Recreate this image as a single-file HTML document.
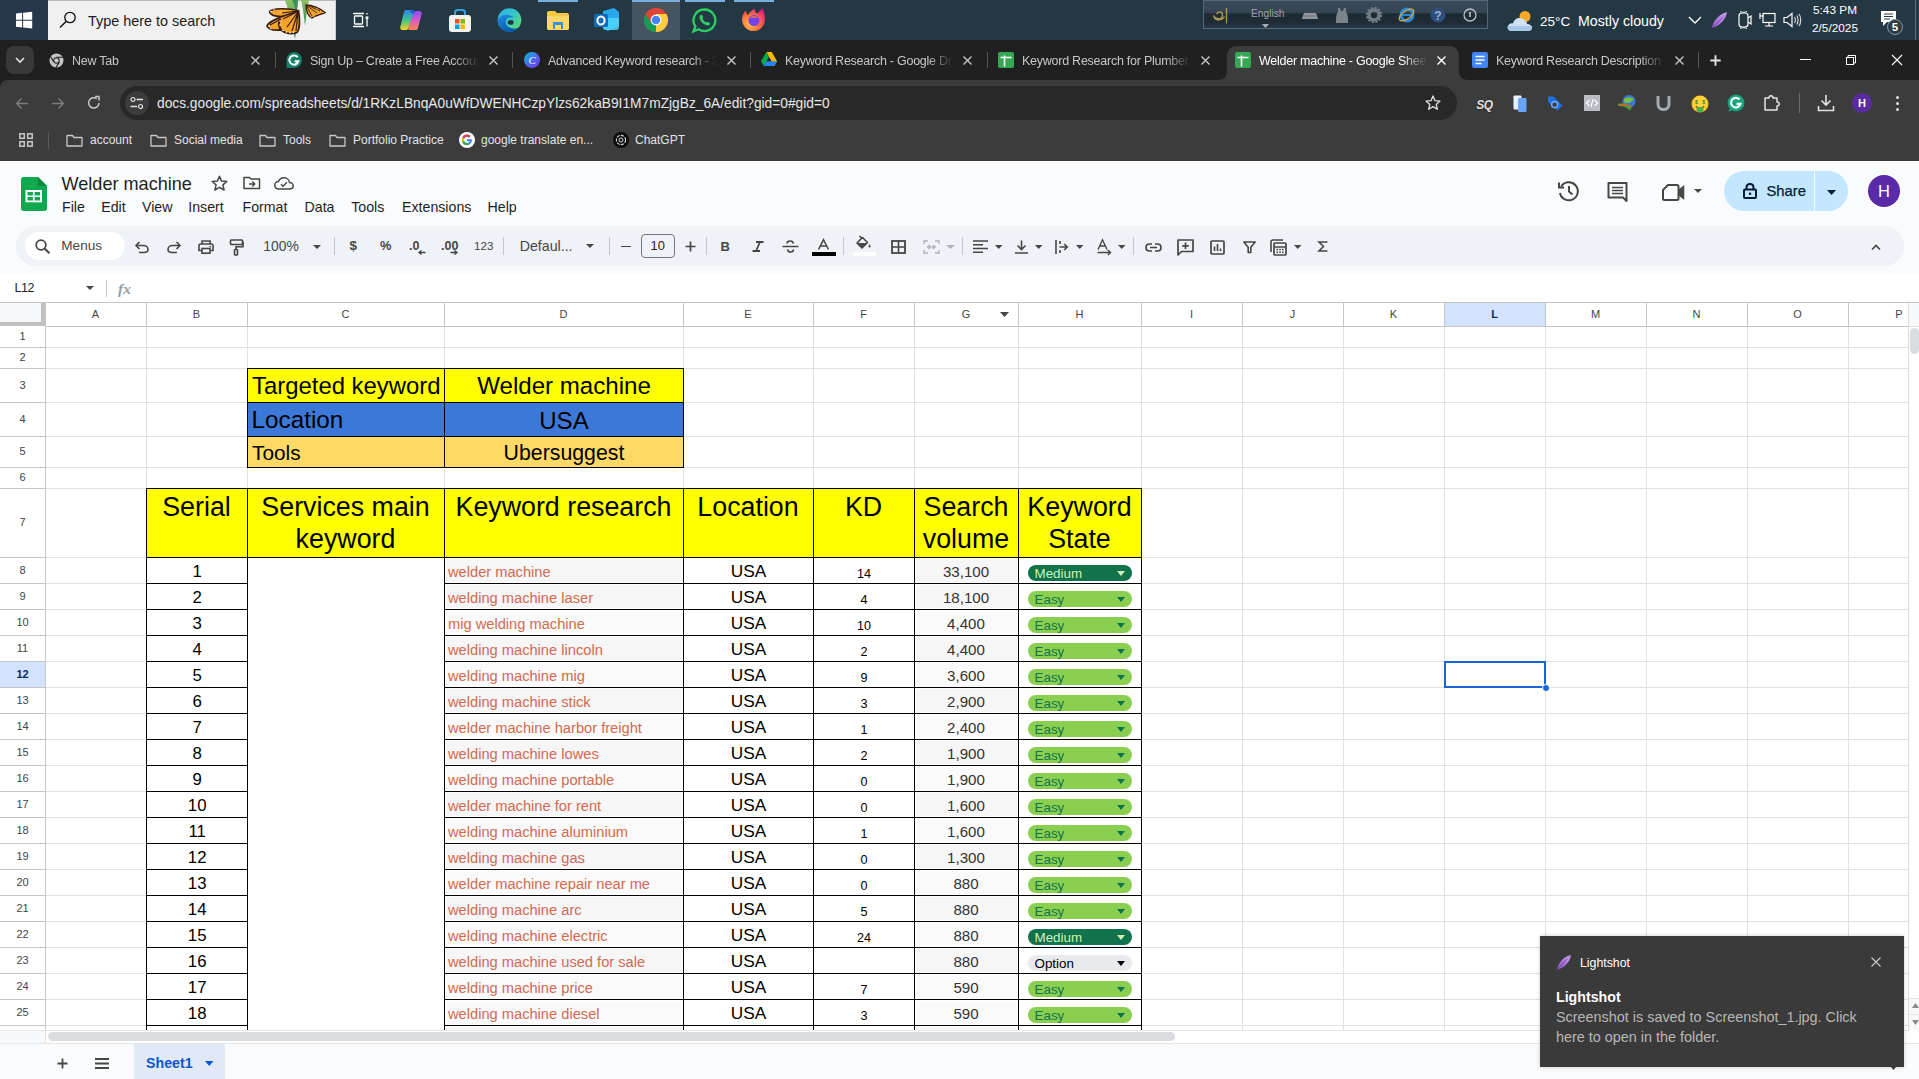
<!DOCTYPE html><html><head><meta charset="utf-8"><style>
*{margin:0;padding:0;box-sizing:border-box}
html,body{width:1919px;height:1079px;overflow:hidden;background:#f9fbfd;font-family:"Liberation Sans",sans-serif}
.a{position:absolute}
.t{position:absolute;white-space:nowrap;line-height:1}
svg{position:absolute;overflow:visible}
</style></head><body>
<div class="a" style="left:0px;top:0px;width:1919px;height:40px;background:#243844"></div>
<div class="a" style="left:0px;top:0px;width:48px;height:40px;background:#28384a"></div>
<svg style="left:16px;top:11.5px;" width="17" height="18" viewBox="0 0 17 18"><path d="M0 1.6L6.1 0.8V7.8H0z M7.1 0.7L16.2 -0.3V7.8H7.1z M0 8.8H6.1V15.5L0 14.7z M7.1 8.8H16.2V16.6L7.1 15.6z" fill="#fff"/></svg>
<div class="a" style="left:48px;top:0px;width:288px;height:40px;background:#f0f0f0"></div>
<div class="a" style="left:48px;top:0px;width:288px;height:1px;background:#b8b8b8"></div>
<svg style="left:59px;top:11px;" width="18" height="18" viewBox="0 0 18 18"><circle cx="11" cy="6.5" r="5.2" fill="none" stroke="#111" stroke-width="1.3"/><path d="M7.3 10.2L1 16.6" stroke="#111" stroke-width="1.4"/></svg>
<div class="t" style="left:88px;top:14.31px;font-size:14.4px;color:#1b1b1b;">Type here to search</div>
<svg style="left:260px;top:0px;" width="76" height="40" viewBox="0 0 76 40"><defs><linearGradient id="lf" x1="0" y1="0" x2="0" y2="1"><stop offset="0" stop-color="#8cc163"/><stop offset="1" stop-color="#2f8a55"/></linearGradient></defs>
<path d="M25 0 H32 C37 8 38 22 35 39 C33 30 30 14 25 0Z" fill="url(#lf)"/>
<path d="M32 0 H38 C38 6 37 10 36 13 C35 8 34 4 32 0Z" fill="#3c8f5a"/>
<path d="M41 0 H49 C47 8 46 18 45 26 C44 16 43 8 41 0Z" fill="url(#lf)"/>
<path d="M9.5 11.5 C13 8 28 8 38 10.5 C37 13.5 30 16 21 16.5 C14 16.5 10 14.5 9.5 11.5Z" fill="#f2a52e" stroke="#3b1d0c" stroke-width="1.6"/>
<path d="M7 26 C9 21 20 17 38.5 11 C40 19 40 29 37 32.5 C32 34.5 25 33.5 21 30 C15 30.5 8.5 29.5 7 26Z" fill="#f3a22a" stroke="#3b1d0c" stroke-width="1.8"/>
<path d="M38 11.5 L23 19 M38 12 L27 27 M38 12 L32 31 M38 12 L36 31 M38 11 L22 13 M21 19 L10 25" stroke="#3b1d0c" stroke-width="1.2"/>
<path d="M20 19 C18 22 19 27 21 30" stroke="#3b1d0c" stroke-width="2.2" fill="none"/>
<g fill="#fff"><circle cx="11" cy="11.5" r=".8"/><circle cx="14" cy="9.3" r=".7"/><circle cx="9" cy="26" r=".8"/><circle cx="11" cy="28.5" r=".7"/><circle cx="20" cy="21" r=".8"/><circle cx="20" cy="25" r=".8"/><circle cx="23" cy="30.5" r=".8"/><circle cx="26.5" cy="32" r=".8"/><circle cx="30" cy="32.8" r=".8"/><circle cx="33.5" cy="32.3" r=".7"/><circle cx="21" cy="12" r=".6"/></g>
<path d="M46 5 C52 5 60 8 65 12.5 C61 14.5 55 15.5 52 18 C49 17 46 12 46 5Z" fill="#f2a52e" stroke="#3b1d0c" stroke-width="1.4"/>
<path d="M46.5 6 L52 16 M47 6 L57 13 M48 5.5 L60 11" stroke="#3b1d0c" stroke-width=".9"/>
<g fill="#fff"><circle cx="63" cy="12.5" r=".6"/><circle cx="57" cy="9" r=".6"/><circle cx="51" cy="17" r=".6"/><circle cx="54" cy="16" r=".6"/></g>
</svg>
<div class="a" style="left:335px;top:0px;width:1px;height:40px;background:#d0d0d0"></div>
<svg style="left:352px;top:12px;" width="17" height="16" viewBox="0 0 17 16"><path d="M1 1.5h11 M1 14.5h11 M2.5 4v8 M10.5 4v8 M2.5 4h8 M2.5 12h8 M15 1v1.5 M15 5v9.5" stroke="#fff" stroke-width="1.3" fill="none"/><rect x="13.6" y="4.4" width="2.8" height="2.6" fill="#fff"/></svg>
<svg style="left:399px;top:9px;" width="24" height="22" viewBox="0 0 24 22"><defs><linearGradient id="cp1" x1="0" y1="0" x2="0" y2="1"><stop offset="0" stop-color="#2f86f2"/><stop offset=".5" stop-color="#3cc48e"/><stop offset="1" stop-color="#f4d41c"/></linearGradient>
<linearGradient id="cp2" x1="0" y1="0" x2="0" y2="1"><stop offset="0" stop-color="#8a4cf0"/><stop offset=".5" stop-color="#d95ac6"/><stop offset="1" stop-color="#ff8a48"/></linearGradient></defs>
<path d="M7 1 H13.5 C15 1 15.8 2.3 15.3 3.7 L10 18.5 C9.5 20 8.5 21 7 21 H3.5 C2 21 0.8 19.5 1.3 18 L5 3 C5.4 1.8 6 1 7 1Z" fill="url(#cp1)"/>
<path d="M17.5 21 H11 C9.5 21 8.7 19.7 9.2 18.3 L14.5 4.5 C15 3 16 2 17.5 2 H20.5 C22 2 23.2 3.5 22.7 5 L19 19 C18.6 20.2 18.2 21 17.5 21Z" fill="url(#cp2)"/>
<path d="M13 1 C14.5 1 15.5 2 15 3.5 L14.2 6 C13.5 4 12 3 10 3 Z" fill="#1f5fd6"/></svg>
<svg style="left:448px;top:9px;" width="24" height="24" viewBox="0 0 24 24"><path d="M7 6 V3.5 C7 2 8 1 9.5 1 H14.5 C16 1 17 2 17 3.5 V6" stroke="#3aa0e6" stroke-width="2" fill="none"/><rect x="1" y="6" width="22" height="17" rx="3" fill="#f3f3f3"/><rect x="7" y="10" width="4.5" height="4.5" fill="#f25022"/><rect x="12.5" y="10" width="4.5" height="4.5" fill="#7fba00"/><rect x="7" y="15.5" width="4.5" height="4.5" fill="#00a4ef"/><rect x="12.5" y="15.5" width="4.5" height="4.5" fill="#ffb900"/></svg>
<div class="a" style="left:538px;top:0px;width:40px;height:2px;background:#76b0e2"></div>
<div class="a" style="left:632px;top:0px;width:48px;height:2px;background:#76b0e2"></div>
<div class="a" style="left:685px;top:0px;width:40px;height:2px;background:#76b0e2"></div>
<div class="a" style="left:734px;top:0px;width:40px;height:2px;background:#76b0e2"></div>
<div class="a" style="left:632px;top:2px;width:48px;height:38px;background:#45545e"></div>
<svg style="left:497px;top:8px;" width="25" height="24" viewBox="0 0 25 24"><defs><linearGradient id="eg1" x1="0" y1="0" x2="1" y2=".8"><stop offset="0" stop-color="#2ab0e8"/><stop offset=".55" stop-color="#35c8c8"/><stop offset="1" stop-color="#5fdc60"/></linearGradient>
<linearGradient id="eg2" x1="0" y1="0" x2=".6" y2="1"><stop offset="0" stop-color="#1e8ee6"/><stop offset="1" stop-color="#0b55a6"/></linearGradient></defs>
<circle cx="12.5" cy="12" r="11.8" fill="url(#eg1)"/>
<path d="M0.7 13 C0.7 19.5 6 24 12.5 24 C16.5 24 20 22.3 22.3 19.3 C19.5 20.8 15.5 21.2 12.5 19.6 C9 17.8 7.6 14 9.6 11.2 C11.2 9 14.5 8.8 16.8 10.3 C14.5 6.5 8.5 5.5 4.5 8 C2.2 9.4 0.7 11 0.7 13Z" fill="url(#eg2)"/>
<ellipse cx="13.6" cy="14.4" rx="3" ry="2.3" fill="#243844"/></svg>
<svg style="left:546px;top:11px;" width="24" height="19" viewBox="0 0 24 19"><path d="M1 2 C1 1 2 0 3 0 H9 L11 2 H21 C22 2 23 3 23 4 V17 C23 18 22 19 21 19 H3 C2 19 1 18 1 17Z" fill="#f6c945"/><path d="M1 5 H23 V17 C23 18 22 19 21 19 H3 C2 19 1 18 1 17Z" fill="#ffd866"/><rect x="7" y="11" width="10" height="7" fill="#3a8ee6"/><rect x="9" y="14" width="6" height="5" fill="#ffd866"/></svg>
<svg style="left:594px;top:8px;" width="26" height="24" viewBox="0 0 26 24"><path d="M9 3 L20 0 L25 4 V18 L14 23 L9 20Z" fill="#28a8ea"/><path d="M9 10 H25 V19 C25 21 24 22 22 22 H11 C10 22 9 21 9 19Z" fill="#50d9ff" opacity=".8"/><rect x="0" y="6" width="14" height="13" rx="1.5" fill="#0f6cbd"/><ellipse cx="7" cy="12.5" rx="3.6" ry="4" fill="none" stroke="#fff" stroke-width="2"/></svg>
<svg style="left:644px;top:8px;" width="24" height="24" viewBox="0 0 24 24"><circle cx="12" cy="12" r="12" fill="#db4437"/><path d="M12 12 L1.6 6 A12 12 0 0 0 12 24Z" fill="#0f9d58"/><path d="M12 12 L12 24 A12 12 0 0 0 22.4 6 L12 6Z" fill="#ffcd40"/><path d="M12 6 H22.4 A12 12 0 0 0 1.6 6 L7 15Z" fill="#db4437"/><circle cx="12" cy="12" r="5.4" fill="#fff"/><circle cx="12" cy="12" r="4.3" fill="#4285f4"/></svg>
<svg style="left:692px;top:8px;" width="25" height="25" viewBox="0 0 25 25"><path d="M12.5 1.5 A10.8 10.8 0 1 1 6.6 21.3 L1.5 23.5 L3.4 18.4 A10.8 10.8 0 0 1 12.5 1.5Z" fill="none" stroke="#2ccf63" stroke-width="2.3"/><path d="M8.4 7.3 C9 6.7 10 6.7 10.3 7.4 L11.1 9.3 C11.3 9.8 11 10.3 10.6 10.7 C11.3 12.3 12.6 13.6 14.3 14.4 C14.7 14 15.2 13.7 15.7 13.9 L17.6 14.7 C18.3 15 18.3 16 17.7 16.6 C16.8 17.6 15.2 17.8 13.8 17.1 C11 15.8 9 13.8 7.8 11.2 C7.2 9.8 7.4 8.2 8.4 7.3Z" fill="#2ccf63"/></svg>
<svg style="left:741px;top:7px;" width="25" height="25" viewBox="0 0 25 25"><defs><radialGradient id="ff1" cx=".35" cy=".7" r=".8"><stop offset="0" stop-color="#ffbd4f"/><stop offset=".5" stop-color="#ff7139"/><stop offset="1" stop-color="#e31587"/></radialGradient></defs>
<path d="M12.5 24 A11.5 11.5 0 0 1 1 12.5 C1 8 3 5 5 3.5 C4.8 6 6 7.5 7 8 C8 5.5 11 3 14 1.5 C13 4 14.5 5.5 16 6.5 C19 4.5 21 1.5 21 1 C23 3.5 24 8 24 12.5 A11.5 11.5 0 0 1 12.5 24Z" fill="url(#ff1)"/>
<circle cx="13" cy="13.5" r="5.5" fill="#7542e5"/><path d="M9 11 C11 8.5 16 9 17 11 C15 10.5 12 11 9 11Z" fill="#ff7139"/></svg>
<div class="a" style="left:1203px;top:0px;width:285px;height:29px;background:linear-gradient(#3a4a58 0%,#344452 44%,#1f2b34 47%,#1f2b35 78%,#27384a 100%);border:1px solid #55687a"></div>
<svg style="left:1213px;top:7px;" width="16" height="17" viewBox="0 0 16 17"><path d="M11.5 9.5 C10 12 8 13 5.5 13 C2.5 13 1 11 1 9.5 C2 11 3.5 11.8 5.5 11.8 C8 11.8 9.5 10 9.5 8 C9.5 6.3 8.2 5 6.6 5 C5 5 4 6 4 7.2" stroke="#a8984c" stroke-width="1.4" fill="none"/><path d="M13.5 1 V16.5" stroke="#a8984c" stroke-width="1.4"/></svg>
<div class="t" style="left:1251px;top:8.57px;font-size:10.2px;color:#9ea7af;">English</div>
<svg style="left:1262px;top:24px;" width="7" height="4" viewBox="0 0 7 4"><path d="M0 0h7l-3.5 4z" fill="#a9b3bb"/></svg>
<svg style="left:1302px;top:12px;" width="16" height="8" viewBox="0 0 16 8"><path d="M2 1h12l2 6H0z" fill="#8d969c"/><path d="M2 4h12" stroke="#5a636a" stroke-width=".6"/></svg>
<svg style="left:1336px;top:8px;" width="12" height="15" viewBox="0 0 12 15"><path d="M2 0h2l1 3h2l1-3h2l0 4c2 2 2 6 2 11H0c0-5 0-9 2-11z" fill="#7a848b"/></svg>
<svg style="left:1366px;top:7px;" width="16" height="16" viewBox="0 0 16 16"><circle cx="8" cy="8" r="5" fill="none" stroke="#6f7c86" stroke-width="3.5"/><circle cx="8" cy="8" r="7.2" fill="none" stroke="#6f7c86" stroke-width="2" stroke-dasharray="2.2 1.6"/></svg>
<svg style="left:1398px;top:6px;" width="17" height="17" viewBox="0 0 17 17"><circle cx="9" cy="9" r="6" fill="none" stroke="#2a8ad8" stroke-width="3"/><path d="M3 9h12" stroke="#2a8ad8" stroke-width="2.2"/><ellipse cx="8.5" cy="9" rx="8.5" ry="4" transform="rotate(-35 8.5 9)" fill="none" stroke="#c8a64a" stroke-width="1.4"/></svg>
<svg style="left:1430px;top:7px;" width="16" height="16" viewBox="0 0 16 16"><circle cx="8" cy="8" r="7.5" fill="#2e4e7e"/><text x="8" y="12.5" font-size="12" font-weight="bold" text-anchor="middle" fill="#9fb3cc" font-family="Liberation Sans">?</text></svg>
<svg style="left:1463px;top:8px;" width="14" height="14" viewBox="0 0 14 14"><circle cx="7" cy="7" r="6" fill="none" stroke="#b9c2c8" stroke-width="1.3"/><path d="M7 4v5" stroke="#b9c2c8" stroke-width="1.6"/></svg>
<svg style="left:1507px;top:9px;" width="26" height="23" viewBox="0 0 26 23"><circle cx="18" cy="7.5" r="5.5" fill="#f7a928"/><path d="M5 22 C1 22 0 19 1 17 C2 15 4 14 6 14.5 C7 10 11 8 15 9.5 C18 10.5 20 13 20 15 C23 15 25 17 25 19 C25 21 23 22 21 22Z" fill="#cfe2f5"/><path d="M5 22 C1 22 0 19 1 17 H25 C25 21 23 22 21 22Z" fill="#a9c9ea"/></svg>
<div class="t" style="left:1540px;top:14.57px;font-size:13.5px;color:#fff;">25°C</div>
<div class="t" style="left:1578px;top:13.98px;font-size:14.2px;color:#fff;">Mostly cloudy</div>
<svg style="left:1688px;top:16px;" width="14" height="8" viewBox="0 0 14 8"><path d="M1 1l6 6 6-6" stroke="#fff" stroke-width="1.4" fill="none"/></svg>
<svg style="left:1711px;top:11px;" width="17" height="18" viewBox="0 0 17 18"><defs><linearGradient id="fe1" x1="0" y1="1" x2="1" y2="0"><stop offset="0" stop-color="#9a5ad0"/><stop offset="1" stop-color="#c99be8"/></linearGradient></defs><path d="M1 17 C2 10 8 3 16 1 C15 8 10 14 1 17Z" fill="url(#fe1)"/><path d="M1 17 L12 6" stroke="#6a3a98" stroke-width=".7"/></svg>
<svg style="left:1737px;top:11px;" width="14" height="18" viewBox="0 0 14 18"><path d="M2 5 C2 3 3 2 5 2 H8 C10 2 11 3 11 5 V13 C11 15 10 16 8 16 H5 C3 16 2 15 2 13Z" fill="none" stroke="#fff" stroke-width="1.2"/><path d="M11 7 L14 5 V13 L11 11" stroke="#fff" stroke-width="1.2" fill="none"/><path d="M3 0.5 C5 1.5 8 1.5 10 0.5 M3 17.5 C5 16.5 8 16.5 10 17.5" stroke="#fff" stroke-width=".9" fill="none"/></svg>
<svg style="left:1759px;top:12px;" width="17" height="16" viewBox="0 0 17 16"><rect x="4" y="1.5" width="12" height="9" fill="none" stroke="#fff" stroke-width="1.2"/><path d="M10 10.5v3 M6 14h8 M1 4h4 M1 1v6" stroke="#fff" stroke-width="1.2" fill="none"/></svg>
<svg style="left:1783px;top:12px;" width="18" height="16" viewBox="0 0 18 16"><path d="M1 5.5h3l5-4v13l-5-4H1z" fill="none" stroke="#fff" stroke-width="1.2"/><path d="M11.5 5 C12.7 6.5 12.7 9.5 11.5 11 M13.8 3.5 C15.5 5.5 15.5 10.5 13.8 12.5 M16 2 C18.3 4.8 18.3 11.2 16 14" stroke="#fff" stroke-width="1.1" fill="none" opacity=".85"/></svg>
<div class="t" style="left:1535px;width:600px;text-align:center;top:5.01px;font-size:11.8px;color:#fff;">5:43 PM</div>
<div class="t" style="left:1535px;width:600px;text-align:center;top:23.01px;font-size:11.8px;color:#fff;">2/5/2025</div>
<svg style="left:1879px;top:10px;" width="26" height="24" viewBox="0 0 26 24"><path d="M2 1h15v11H8l-4 4v-4H2z" fill="#fff"/><path d="M5 4h9M5 6.5h9M5 9h6" stroke="#243844" stroke-width="1"/><circle cx="16" cy="17" r="7.5" fill="#2b3a44" stroke="#8a98a2" stroke-width="1"/><text x="16" y="21.2" font-size="11.5" font-weight="bold" text-anchor="middle" fill="#fff" font-family="Liberation Sans">5</text></svg>
<div class="a" style="left:1915px;top:0px;width:1px;height:40px;background:#5d6c76"></div>
<div class="a" style="left:0px;top:40px;width:1919px;height:40px;background:#202020"></div>
<div class="a" style="left:0px;top:80px;width:12px;height:12px;background:#202020"></div>
<div class="a" style="left:0px;top:80px;width:1919px;height:80px;background:#3c3c3c;border-top-left-radius:8px"></div>
<div class="a" style="left:6px;top:46px;width:28px;height:28px;background:#383838;border-radius:8px"></div>
<svg style="left:15px;top:57px;" width="10" height="6" viewBox="0 0 10 6"><path d="M1 1l4 4 4-4" stroke="#e3e3e3" stroke-width="1.6" fill="none"/></svg>
<svg style="left:1217px;top:46px;" width="252" height="34" viewBox="0 0 252 34"><path d="M0 34 C8 34 10 30 10 24 V10 C10 4 14 0 20 0 H232 C238 0 242 4 242 10 V24 C242 30 244 34 252 34Z" fill="#3c3c3c"/></svg>
<svg style="left:49px;top:53px;" width="15" height="15" viewBox="0 0 15 15"><circle cx="7.5" cy="7.5" r="7" fill="#c6c6c6"/><circle cx="7.5" cy="7.5" r="3.2" fill="#202020"/><circle cx="7.5" cy="7.5" r="2.2" fill="#c6c6c6"/><path d="M7.5 4.3 H14 M4.7 9.1 L1.5 3.5 M10.3 9.1 L7 14.5" stroke="#202020" stroke-width="1.1"/></svg>
<div class="t" style="left:72px;top:55.22px;font-size:12.5px;letter-spacing:-0.25px;color:#c7c7c7;width:169px;overflow:hidden;-webkit-mask-image:linear-gradient(90deg,#000 85%,transparent)">New Tab</div>
<svg style="left:251px;top:56px;" width="9" height="9" viewBox="0 0 9 9"><path d="M0.5 0.5l8 8M8.5 0.5l-8 8" stroke="#c7c7c7" stroke-width="1.4"/></svg>
<svg style="left:286px;top:52px;" width="16" height="16" viewBox="0 0 16 16"><path d="M8 0 A8 8 0 1 1 8 16 H0.5 V9 A8 8 0 0 1 8 0Z" fill="#14806c"/><path d="M11.6 5.2 A4.6 4.6 0 1 0 12.4 9.2 H8.6" stroke="#fff" stroke-width="2" fill="none"/></svg>
<div class="t" style="left:310px;top:55.22px;font-size:12.5px;letter-spacing:-0.25px;color:#c7c7c7;width:169px;overflow:hidden;-webkit-mask-image:linear-gradient(90deg,#000 85%,transparent)">Sign Up – Create a Free Accoun</div>
<svg style="left:489px;top:56px;" width="9" height="9" viewBox="0 0 9 9"><path d="M0.5 0.5l8 8M8.5 0.5l-8 8" stroke="#c7c7c7" stroke-width="1.4"/></svg>
<svg style="left:524px;top:52px;" width="16" height="16" viewBox="0 0 16 16"><defs><linearGradient id="cv" x1="0" y1="0" x2="1" y2="1"><stop offset="0" stop-color="#00c4cc"/><stop offset=".5" stop-color="#4b6cf0"/><stop offset="1" stop-color="#7d2ae8"/></linearGradient></defs><circle cx="8" cy="8" r="8" fill="url(#cv)"/><text x="8.2" y="12" font-size="11" font-style="italic" text-anchor="middle" fill="#fff" font-family="Liberation Serif">C</text></svg>
<div class="t" style="left:548px;top:55.22px;font-size:12.5px;letter-spacing:-0.25px;color:#c7c7c7;width:169px;overflow:hidden;-webkit-mask-image:linear-gradient(90deg,#000 85%,transparent)">Advanced Keyword research - 3</div>
<svg style="left:727px;top:56px;" width="9" height="9" viewBox="0 0 9 9"><path d="M0.5 0.5l8 8M8.5 0.5l-8 8" stroke="#c7c7c7" stroke-width="1.4"/></svg>
<svg style="left:761px;top:52px;" width="16" height="14" viewBox="0 0 16 14"><path d="M5.3 0 H10.7 L16 9.3 L13.3 14 Z" fill="#ffba00"/><path d="M5.3 0 L0 9.3 L2.7 14 L8 4.7Z" fill="#00ac47"/><path d="M2.7 14 H13.3 L16 9.3 H5.3Z" fill="#2684fc"/></svg>
<div class="t" style="left:785px;top:55.22px;font-size:12.5px;letter-spacing:-0.25px;color:#c7c7c7;width:168px;overflow:hidden;-webkit-mask-image:linear-gradient(90deg,#000 85%,transparent)">Keyword Research - Google Dri</div>
<svg style="left:963px;top:56px;" width="9" height="9" viewBox="0 0 9 9"><path d="M0.5 0.5l8 8M8.5 0.5l-8 8" stroke="#c7c7c7" stroke-width="1.4"/></svg>
<svg style="left:998px;top:52px;" width="16" height="16" viewBox="0 0 16 16"><rect width="16" height="16" rx="2" fill="#34a853"/><path d="M2.5 5.5h11 M6.5 3.5v11" stroke="#fff" stroke-width="1.6"/></svg>
<div class="t" style="left:1022px;top:55.22px;font-size:12.5px;letter-spacing:-0.25px;color:#c7c7c7;width:169px;overflow:hidden;-webkit-mask-image:linear-gradient(90deg,#000 85%,transparent)">Keyword Research for Plumber</div>
<svg style="left:1201px;top:56px;" width="9" height="9" viewBox="0 0 9 9"><path d="M0.5 0.5l8 8M8.5 0.5l-8 8" stroke="#c7c7c7" stroke-width="1.4"/></svg>
<svg style="left:1235px;top:52px;" width="16" height="16" viewBox="0 0 16 16"><rect width="16" height="16" rx="2" fill="#34a853"/><path d="M2.5 5.5h11 M6.5 3.5v11" stroke="#fff" stroke-width="1.6"/></svg>
<div class="t" style="left:1259px;top:55.22px;font-size:12.5px;letter-spacing:-0.25px;color:#ffffff;width:168px;overflow:hidden;-webkit-mask-image:linear-gradient(90deg,#000 85%,transparent)">Welder machine - Google Shee</div>
<svg style="left:1437px;top:56px;" width="9" height="9" viewBox="0 0 9 9"><path d="M0.5 0.5l8 8M8.5 0.5l-8 8" stroke="#ffffff" stroke-width="1.4"/></svg>
<svg style="left:1472px;top:52px;" width="16" height="16" viewBox="0 0 16 16"><rect width="16" height="16" rx="2" fill="#4285f4"/><path d="M3.5 4.5h9 M3.5 8h9 M3.5 11.5h6" stroke="#fff" stroke-width="1.5"/></svg>
<div class="t" style="left:1496px;top:55.22px;font-size:12.5px;letter-spacing:-0.25px;color:#c7c7c7;width:169px;overflow:hidden;-webkit-mask-image:linear-gradient(90deg,#000 85%,transparent)">Keyword Research Description -</div>
<svg style="left:1675px;top:56px;" width="9" height="9" viewBox="0 0 9 9"><path d="M0.5 0.5l8 8M8.5 0.5l-8 8" stroke="#c7c7c7" stroke-width="1.4"/></svg>
<div class="a" style="left:275px;top:52px;width:1px;height:16px;background:#555"></div>
<div class="a" style="left:512px;top:52px;width:1px;height:16px;background:#555"></div>
<div class="a" style="left:750px;top:52px;width:1px;height:16px;background:#555"></div>
<div class="a" style="left:987px;top:52px;width:1px;height:16px;background:#555"></div>
<div class="a" style="left:1698px;top:52px;width:1px;height:16px;background:#555"></div>
<svg style="left:1710px;top:55px;" width="11" height="11" viewBox="0 0 11 11"><path d="M5.5 0.3v10.4M0.3 5.5h10.4" stroke="#e3e3e3" stroke-width="1.9"/></svg>
<div class="a" style="left:1800px;top:59px;width:11px;height:1px;background:#fff"></div>
<svg style="left:1845px;top:54px;" width="12" height="12" viewBox="0 0 12 12"><path d="M3 3.5 V1.5 H10.5 V9 H8.5" stroke="#fff" stroke-width="1" fill="none"/><rect x="1.5" y="3.5" width="7" height="7" fill="none" stroke="#fff" stroke-width="1"/></svg>
<svg style="left:1891px;top:54px;" width="12" height="12" viewBox="0 0 12 12"><path d="M1 1l10 10M11 1L1 11" stroke="#fff" stroke-width="1.1"/></svg>
<svg style="left:15px;top:97px;" width="14" height="13" viewBox="0 0 14 13"><path d="M13 6.5H1.5 M6.5 1.5L1.5 6.5l5 5" stroke="#7d7d7d" stroke-width="1.4" fill="none"/></svg>
<svg style="left:51px;top:97px;" width="14" height="13" viewBox="0 0 14 13"><path d="M1 6.5h11.5 M7.5 1.5l5 5-5 5" stroke="#7d7d7d" stroke-width="1.4" fill="none"/></svg>
<svg style="left:87px;top:96px;" width="14" height="14" viewBox="0 0 14 14"><path d="M12 7 A5.2 5.2 0 1 1 9.8 2.6" stroke="#c7c7c7" stroke-width="1.5" fill="none"/><path d="M8 0.5 H12 V4.5" stroke="#c7c7c7" stroke-width="1.5" fill="none"/></svg>
<div class="a" style="left:120px;top:86px;width:1337px;height:34px;background:#282828;border-radius:17px"></div>
<div class="a" style="left:125px;top:91px;width:24px;height:24px;background:#3c3c3c;border-radius:12px"></div>
<svg style="left:130px;top:97px;" width="14" height="13" viewBox="0 0 14 13"><circle cx="3" cy="2.5" r="2" fill="none" stroke="#e3e3e3" stroke-width="1.2"/><path d="M6.5 2.5h6.5 M0.5 9.5h6.5" stroke="#e3e3e3" stroke-width="1.3"/><circle cx="10.5" cy="9.5" r="2" fill="none" stroke="#e3e3e3" stroke-width="1.2"/></svg>
<div class="t" style="left:157px;top:96.85px;font-size:13.76px;color:#e8e8e8;">docs.google.com/spreadsheets/d/1RKzLBnqA0uWfDWENHCzpYlzs62kaB9I1M7mZjgBz_6A/edit?gid=0#gid=0</div>
<svg style="left:1425px;top:95px;" width="16" height="15" viewBox="0 0 16 15"><path d="M8 1 L10 5.7 L15 6.1 L11.2 9.4 L12.4 14.3 L8 11.6 L3.6 14.3 L4.8 9.4 L1 6.1 L6 5.7Z" fill="none" stroke="#e3e3e3" stroke-width="1.3" stroke-linejoin="round"/></svg>
<svg style="left:1475px;top:95px;" width="19" height="17" viewBox="0 0 19 17"><text x="9.5" y="14" font-size="12" font-weight="bold" font-style="italic" text-anchor="middle" fill="#e0e0e0" stroke="#2a2a2a" stroke-width="1.6" paint-order="stroke" font-family="Liberation Sans" letter-spacing="-0.5">SQ</text></svg>
<svg style="left:1513px;top:95px;" width="14" height="17" viewBox="0 0 14 17"><rect x="0.5" y="0.5" width="8" height="14" rx="1" fill="#e8f0fe"/><rect x="5" y="3" width="8.5" height="14" rx="1.2" fill="#6aa5f7"/></svg>
<svg style="left:1547px;top:95px;" width="17" height="17" viewBox="0 0 17 17"><path d="M1 7 V1.5 H6.5 L15.5 10.5 L10.5 15.5Z" fill="#1f6fe0"/><circle cx="7.6" cy="9.6" r="3" fill="#3c3c3c" stroke="#6aa5f7" stroke-width="1.6"/></svg>
<div class="a" style="left:1584px;top:95px;width:16px;height:16px;background:#b8bcc4"></div>
<svg style="left:1584px;top:95px;" width="16" height="16" viewBox="0 0 16 16"><path d="M5.5 5 L2.5 8 L5.5 11 M10.5 5 L13.5 8 L10.5 11 M9 4 L7 12" stroke="#fff" stroke-width="1.2" fill="none"/></svg>
<svg style="left:1618px;top:94px;" width="19" height="18" viewBox="0 0 19 18"><circle cx="11" cy="7.5" r="6.5" fill="#3a7bd5"/><path d="M6 5 C9 3 13 3 16 5 C13 9 9 10 6 8Z" fill="#76c043"/><path d="M0 10 C5 9 10 10 14 12 L12 17 C9 13 5 12 0 12Z" fill="#3da33a"/><path d="M1 11 C6 10 10 11 13 13" stroke="#e85a2a" stroke-width="1.5" fill="none"/></svg>
<svg style="left:1656px;top:96px;" width="15" height="15" viewBox="0 0 15 15"><path d="M2 0 V8 C2 11.5 4.5 13.5 7.5 13.5 C10.5 13.5 13 11.5 13 8 V0" stroke="#a4aaae" stroke-width="3" fill="none"/></svg>
<svg style="left:1691px;top:95px;" width="18" height="18" viewBox="0 0 18 18"><circle cx="9" cy="9" r="8.5" fill="#f6c21b"/><circle cx="9" cy="8" r="7" fill="#ffd43a"/><path d="M5 11 C6 13.5 12 13.5 13 11" stroke="#7a4a10" stroke-width="1.2" fill="none"/><rect x="5.5" y="12" width="7" height="5" rx="2" fill="#4caf50"/><text x="5.3" y="9" font-size="5" font-weight="bold" text-anchor="middle" fill="#2e7d32" font-family="Liberation Sans">$</text><text x="12.7" y="9" font-size="5" font-weight="bold" text-anchor="middle" fill="#2e7d32" font-family="Liberation Sans">$</text></svg>
<svg style="left:1727px;top:94px;" width="18" height="18" viewBox="0 0 18 18"><circle cx="9" cy="9" r="8.5" fill="#15a37a"/><path d="M12.5 5.5 A4.8 4.8 0 1 0 13.5 9.8 H9.5" stroke="#fff" stroke-width="2.2" fill="none"/><path d="M2 17 L6 14" stroke="#15a37a" stroke-width="2"/></svg>
<svg style="left:1763px;top:94px;" width="19" height="18" viewBox="0 0 19 18"><path d="M2 4 H6 C6 1 10 1 10 4 H14 V8 C17 8 17 12 14 12 V16 H2Z" fill="none" stroke="#e3e3e3" stroke-width="1.5" stroke-linejoin="round"/></svg>
<div class="a" style="left:1799px;top:93px;width:1px;height:20px;background:#6a6a6a"></div>
<svg style="left:1817px;top:94px;" width="18" height="18" viewBox="0 0 18 18"><path d="M9 1v10 M4.5 6.5L9 11l4.5-4.5 M1.5 12v4.5h15V12" stroke="#e3e3e3" stroke-width="1.6" fill="none"/></svg>
<div class="a" style="left:1852px;top:93px;width:20px;height:20px;background:#5a2ca0;border-radius:50%"></div>
<div class="t" style="left:1562px;width:600px;text-align:center;top:98.19px;font-size:11px;color:#fff;font-weight:bold">H</div>
<div class="a" style="left:1896px;top:95.5px;width:3px;height:3px;background:#e3e3e3;border-radius:50%"></div>
<div class="a" style="left:1896px;top:101.5px;width:3px;height:3px;background:#e3e3e3;border-radius:50%"></div>
<div class="a" style="left:1896px;top:107.5px;width:3px;height:3px;background:#e3e3e3;border-radius:50%"></div>
<svg style="left:19px;top:133px;" width="14" height="14" viewBox="0 0 14 14"><rect x="0.8" y="0.8" width="4.5" height="4.5" fill="none" stroke="#c7c7c7" stroke-width="1.5"/><rect x="8.7" y="0.8" width="4.5" height="4.5" fill="none" stroke="#c7c7c7" stroke-width="1.5"/><rect x="0.8" y="8.7" width="4.5" height="4.5" fill="none" stroke="#c7c7c7" stroke-width="1.5"/><rect x="8.7" y="8.7" width="4.5" height="4.5" fill="none" stroke="#c7c7c7" stroke-width="1.5"/></svg>
<div class="a" style="left:48px;top:132px;width:1px;height:17px;background:#5a5a5a"></div>
<svg style="left:66px;top:134px;" width="17" height="13" viewBox="0 0 17 13"><path d="M1 1.5 H6.5 L8 3.5 H16 V12 H1Z" fill="none" stroke="#c7c7c7" stroke-width="1.3" stroke-linejoin="round"/></svg>
<div class="t" style="left:90px;top:134.34px;font-size:12px;color:#e3e3e3;">account</div>
<svg style="left:150px;top:134px;" width="17" height="13" viewBox="0 0 17 13"><path d="M1 1.5 H6.5 L8 3.5 H16 V12 H1Z" fill="none" stroke="#c7c7c7" stroke-width="1.3" stroke-linejoin="round"/></svg>
<div class="t" style="left:174px;top:134.34px;font-size:12px;color:#e3e3e3;">Social media</div>
<svg style="left:259px;top:134px;" width="17" height="13" viewBox="0 0 17 13"><path d="M1 1.5 H6.5 L8 3.5 H16 V12 H1Z" fill="none" stroke="#c7c7c7" stroke-width="1.3" stroke-linejoin="round"/></svg>
<div class="t" style="left:283px;top:134.34px;font-size:12px;color:#e3e3e3;">Tools</div>
<svg style="left:329px;top:134px;" width="17" height="13" viewBox="0 0 17 13"><path d="M1 1.5 H6.5 L8 3.5 H16 V12 H1Z" fill="none" stroke="#c7c7c7" stroke-width="1.3" stroke-linejoin="round"/></svg>
<div class="t" style="left:353px;top:134.34px;font-size:12px;color:#e3e3e3;">Portfolio Practice</div>
<svg style="left:459px;top:132px;" width="16" height="16" viewBox="0 0 16 16"><circle cx="8" cy="8" r="8" fill="#fff"/><path d="M13.3 8.4 H8.2 V10 H11.4 C11 11.6 9.7 12.4 8 12.4 A4.4 4.4 0 1 1 10.9 4.7" stroke="none" fill="none"/><path d="M12.6 7.2H8v2h2.6c-.3 1.2-1.3 1.9-2.6 1.9a3.1 3.1 0 1 1 2-5.5l1.5-1.5A5.2 5.2 0 1 0 13 8.7c0-.5 0-1-.4-1.5z" fill="#4285f4"/><path d="M3.3 5.2 5 6.5A3.1 3.1 0 0 1 10 5.6l1.5-1.5A5.2 5.2 0 0 0 3.3 5.2z" fill="#ea4335"/><path d="M8 13.2a5.2 5.2 0 0 1-4.7-3l1.7-1.3a3.1 3.1 0 0 0 4.6 1.5l1.6 1.3A5.2 5.2 0 0 1 8 13.2z" fill="#34a853"/><path d="M2.8 8a5.2 5.2 0 0 1 .5-2.8L5 6.5a3.1 3.1 0 0 0 0 2.4L3.3 10.2A5.2 5.2 0 0 1 2.8 8z" fill="#fbbc05"/></svg>
<div class="t" style="left:481px;top:134.34px;font-size:12px;color:#e3e3e3;">google translate en...</div>
<svg style="left:613px;top:132px;" width="16" height="16" viewBox="0 0 16 16"><circle cx="8" cy="8" r="8" fill="#0d0d0d"/><circle cx="8" cy="8" r="4.6" fill="none" stroke="#d9d9d9" stroke-width="1.1" stroke-dasharray="3 1.2"/><circle cx="8" cy="8" r="2" fill="none" stroke="#d9d9d9" stroke-width="1"/></svg>
<div class="t" style="left:635px;top:134.34px;font-size:12px;color:#e3e3e3;">ChatGPT</div>
<div class="a" style="left:0px;top:160px;width:1919px;height:1px;background:#363636"></div>
<div class="a" style="left:0px;top:161px;width:1919px;height:1px;background:#fff"></div>
<div class="a" style="left:0px;top:162px;width:1919px;height:141px;background:#f9fbfd"></div>
<svg style="left:21px;top:177px;" width="26" height="34" viewBox="0 0 26 34"><path d="M2.5 0 H17 L26 9 V31.5 C26 33 25 34 23.5 34 H2.5 C1 34 0 33 0 31.5 V2.5 C0 1 1 0 2.5 0Z" fill="#0ea84e"/><path d="M17 0 L26 9 H17Z" fill="#0a8a3a"/><rect x="4.5" y="13" width="16.5" height="12.3" fill="#fff"/><rect x="6.5" y="15" width="5.4" height="3.5" fill="#0ea84e"/><rect x="13.6" y="15" width="5.4" height="3.5" fill="#0ea84e"/><rect x="6.5" y="20" width="5.4" height="3.5" fill="#0ea84e"/><rect x="13.6" y="20" width="5.4" height="3.5" fill="#0ea84e"/></svg>
<div class="t" style="left:61.5px;top:175.48px;font-size:18.1px;color:#1f1f1f;">Welder machine</div>
<svg style="left:211px;top:175px;" width="17" height="16" viewBox="0 0 17 16"><path d="M8.5 1.3 L10.6 6.1 L15.8 6.5 L11.9 9.9 L13.1 15 L8.5 12.3 L3.9 15 L5.1 9.9 L1.2 6.5 L6.4 6.1Z" fill="none" stroke="#444746" stroke-width="1.5" stroke-linejoin="round"/></svg>
<svg style="left:243px;top:176px;" width="18" height="14" viewBox="0 0 18 14"><path d="M1 1.5 H6.5 L8 3 H16.5 V12.5 H1Z" fill="none" stroke="#444746" stroke-width="1.5" stroke-linejoin="round"/><path d="M6 8 H11.5 M9.3 5.6 L11.7 8 L9.3 10.4" stroke="#444746" stroke-width="1.4" fill="none"/></svg>
<svg style="left:274px;top:177px;" width="20" height="13" viewBox="0 0 20 13"><path d="M5 12 C2 12 0.8 10 0.8 8 C0.8 6 2.5 4.5 4.5 4.5 C5.5 2 7.5 0.8 10 0.8 C13 0.8 15.2 3 15.5 5.5 C17.5 5.5 19.2 7 19.2 9 C19.2 11 17.5 12 15.5 12Z" fill="none" stroke="#444746" stroke-width="1.5"/><path d="M7 7.2 L9 9.2 L13 5.2" stroke="#444746" stroke-width="1.4" fill="none"/></svg>
<div class="t" style="left:62px;top:199.98px;font-size:14.2px;color:#1f1f1f;">File</div>
<div class="t" style="left:101.25px;top:199.98px;font-size:14.2px;color:#1f1f1f;">Edit</div>
<div class="t" style="left:142px;top:199.98px;font-size:14.2px;color:#1f1f1f;">View</div>
<div class="t" style="left:188.25px;top:199.98px;font-size:14.2px;color:#1f1f1f;">Insert</div>
<div class="t" style="left:242.5px;top:199.98px;font-size:14.2px;color:#1f1f1f;">Format</div>
<div class="t" style="left:304.5px;top:199.98px;font-size:14.2px;color:#1f1f1f;">Data</div>
<div class="t" style="left:351.25px;top:199.98px;font-size:14.2px;color:#1f1f1f;">Tools</div>
<div class="t" style="left:402px;top:199.98px;font-size:14.2px;color:#1f1f1f;">Extensions</div>
<div class="t" style="left:487.5px;top:199.98px;font-size:14.2px;color:#1f1f1f;">Help</div>
<svg style="left:1557px;top:180px;" width="23" height="22" viewBox="0 0 23 22"><path d="M4.2 6.5 A9 9 0 1 1 3 13" stroke="#444746" stroke-width="2" fill="none"/><path d="M2 2.5 V7.5 H7" stroke="#444746" stroke-width="2" fill="none"/><path d="M12 6 V11.5 L15.5 14.5" stroke="#444746" stroke-width="2" fill="none"/></svg>
<svg style="left:1607px;top:182px;" width="22" height="20" viewBox="0 0 22 20"><path d="M1.5 1 H19.5 V19 L16 15.5 H1.5Z" fill="none" stroke="#444746" stroke-width="2" stroke-linejoin="round"/><path d="M5 5.5 H16 M5 8.5 H16 M5 11.5 H16" stroke="#444746" stroke-width="1.7"/></svg>
<svg style="left:1662px;top:184px;" width="23" height="17" viewBox="0 0 23 17"><path d="M6 1 H15 C16 1 16.5 1.5 16.5 2.5 V14.5 C16.5 15.5 16 16 15 16 H2.5 C1.5 16 1 15.5 1 14.5 V6Z" fill="none" stroke="#444746" stroke-width="2" stroke-linejoin="round"/><path d="M16.5 6.5 L21.5 2.5 V14.5 L16.5 10.5" fill="#444746" stroke="#444746" stroke-width="1.5"/></svg>
<svg style="left:1693.5px;top:188.5px;" width="8" height="4" viewBox="0 0 8 4"><path d="M0 0h8l-4 4z" fill="#444746"/></svg>
<div class="a" style="left:1724px;top:171px;width:124px;height:40px;background:#c2e7ff;border-radius:20px"></div>
<div class="a" style="left:1814px;top:171px;width:1px;height:40px;background:#f9fbfd"></div>
<svg style="left:1743px;top:183px;" width="14" height="16" viewBox="0 0 14 16"><rect x="1" y="6.5" width="12" height="8.5" rx="1" fill="none" stroke="#001d35" stroke-width="2"/><path d="M3.5 6.5 V4.5 C3.5 2.3 5 1 7 1 C9 1 10.5 2.3 10.5 4.5 V6.5" fill="none" stroke="#001d35" stroke-width="2"/><circle cx="7" cy="10.8" r="1.3" fill="#001d35"/></svg>
<div class="t" style="left:1766.5px;top:183.77px;font-size:14.8px;color:#001d35;-webkit-text-stroke:0.25px #001d35">Share</div>
<svg style="left:1826.5px;top:189.5px;" width="9" height="5" viewBox="0 0 9 5"><path d="M0 0h9l-4.5 5z" fill="#001d35"/></svg>
<div class="a" style="left:1868px;top:175px;width:32px;height:32px;background:#5b2aa6;border-radius:50%"></div>
<div class="t" style="left:1584px;width:600px;text-align:center;top:183.03px;font-size:16.5px;color:#fff;">H</div>
<div class="a" style="left:16px;top:226px;width:1888px;height:40px;background:#eff2f7;border-radius:20px"></div>
<div class="a" style="left:25px;top:232px;width:100px;height:28px;background:#fff;border-radius:14px"></div>
<svg style="left:35px;top:239px;" width="16" height="15" viewBox="0 0 16 15"><circle cx="6" cy="6" r="4.8" fill="none" stroke="#444746" stroke-width="1.8"/><path d="M9.5 9.5 L14.5 14.3" stroke="#444746" stroke-width="2"/></svg>
<div class="t" style="left:61.3px;top:238.79px;font-size:13.6px;color:#444746;">Menus</div>
<svg style="left:135px;top:241px;" width="14" height="12" viewBox="0 0 14 12"><path d="M4.5 1 L1 4.5 L4.5 8" stroke="#444746" stroke-width="1.6" fill="none"/><path d="M1.5 4.5 H8.5 C11 4.5 13 6.3 13 8.5 C13 10.5 11 11.5 9 11.5 H4" stroke="#444746" stroke-width="1.6" fill="none"/></svg>
<svg style="left:167px;top:241px;" width="14" height="12" viewBox="0 0 14 12"><path d="M9.5 1 L13 4.5 L9.5 8" stroke="#444746" stroke-width="1.6" fill="none"/><path d="M12.5 4.5 H5.5 C3 4.5 1 6.3 1 8.5 C1 10.5 3 11.5 5 11.5 H10" stroke="#444746" stroke-width="1.6" fill="none"/></svg>
<svg style="left:198px;top:240px;" width="16" height="14" viewBox="0 0 16 14"><path d="M4 4 V1 H12 V4" stroke="#444746" stroke-width="1.6" fill="none"/><path d="M3.5 10.5 H1 V5.5 C1 4.7 1.7 4 2.5 4 H13.5 C14.3 4 15 4.7 15 5.5 V10.5 H12.5" stroke="#444746" stroke-width="1.6" fill="none"/><rect x="4" y="8.5" width="8" height="4.7" fill="none" stroke="#444746" stroke-width="1.6"/><circle cx="12.3" cy="6.6" r=".8" fill="#444746"/></svg>
<svg style="left:229px;top:239px;" width="15" height="17" viewBox="0 0 15 17"><rect x="1.5" y="1" width="12" height="4.5" rx=".8" fill="none" stroke="#444746" stroke-width="1.6"/><path d="M13.5 3.3 H14 V7.8 H7 V10.5" stroke="#444746" stroke-width="1.6" fill="none"/><rect x="5.5" y="10.5" width="3" height="5.5" rx=".6" fill="none" stroke="#444746" stroke-width="1.6"/></svg>
<div class="t" style="left:263.3px;top:240.23px;font-size:13.9px;color:#444746;">100%</div>
<svg style="left:313px;top:244.5px;" width="8" height="4" viewBox="0 0 8 4"><path d="M0 0h8l-4 4z" fill="#444746"/></svg>
<div class="a" style="left:334px;top:237px;width:1px;height:18px;background:#c7c7c7"></div>
<div class="a" style="left:503px;top:237px;width:1px;height:18px;background:#c7c7c7"></div>
<div class="a" style="left:609px;top:237px;width:1px;height:18px;background:#c7c7c7"></div>
<div class="a" style="left:706px;top:237px;width:1px;height:18px;background:#c7c7c7"></div>
<div class="a" style="left:843px;top:237px;width:1px;height:18px;background:#c7c7c7"></div>
<div class="a" style="left:962px;top:237px;width:1px;height:18px;background:#c7c7c7"></div>
<div class="a" style="left:1133px;top:237px;width:1px;height:18px;background:#c7c7c7"></div>
<div class="t" style="left:349.5px;top:239.27px;font-size:13.5px;color:#444746;font-weight:bold">$</div>
<div class="t" style="left:380px;top:239.86px;font-size:12.8px;color:#444746;font-weight:bold">%</div>
<div class="t" style="left:409px;top:239.92px;font-size:12.5px;color:#444746;font-weight:bold">.0</div>
<svg style="left:418px;top:249.5px;" width="8" height="5" viewBox="0 0 8 5"><path d="M7.5 2.5 H1.5 M3.5 0.5 L1 2.5 L3.5 4.5" stroke="#444746" stroke-width="1.4" fill="none"/></svg>
<div class="t" style="left:441px;top:239.92px;font-size:12.5px;color:#444746;font-weight:bold">.00</div>
<svg style="left:450px;top:249.5px;" width="8" height="5" viewBox="0 0 8 5"><path d="M0.5 2.5 H6.5 M4.5 0.5 L7 2.5 L4.5 4.5" stroke="#444746" stroke-width="1.4" fill="none"/></svg>
<div class="t" style="left:474px;top:240.48px;font-size:11.6px;color:#444746;">123</div>
<div class="t" style="left:519.7px;top:239.18px;font-size:14.2px;color:#444746;">Defaul...</div>
<svg style="left:586px;top:243.7px;" width="8" height="4" viewBox="0 0 8 4"><path d="M0 0h8l-4 4z" fill="#444746"/></svg>
<div class="a" style="left:620.5px;top:245.5px;width:10.5px;height:1.6px;background:#444746"></div>
<div class="a" style="left:641px;top:234px;width:34px;height:24px;border:1px solid #747775;border-radius:4px"></div>
<div class="t" style="left:650.5px;top:239.78px;font-size:12.9px;color:#1f1f1f;">10</div>
<svg style="left:684.5px;top:240.5px;" width="11" height="11" viewBox="0 0 11 11"><path d="M5.5 0.5 V10.5 M0.5 5.5 H10.5" stroke="#444746" stroke-width="1.7"/></svg>
<div class="t" style="left:720.5px;top:240.00px;font-size:13px;color:#444746;font-weight:bold">B</div>
<svg style="left:752px;top:241px;" width="12" height="11" viewBox="0 0 12 11"><path d="M4 1 H11.5 M0.5 10 H8 M8 1 L4 10" stroke="#444746" stroke-width="1.8" fill="none"/></svg>
<svg style="left:781.5px;top:240px;" width="17" height="13" viewBox="0 0 17 13"><path d="M0.5 6.5 H16.5" stroke="#444746" stroke-width="1.5"/><path d="M11.5 3.5 C11 1.8 9.8 1 8.3 1 C6.5 1 5 2 5 3.5 M5.5 9.5 C5.8 11 7 12 8.5 12 C10.3 12 11.5 11 11.5 9.5" stroke="#444746" stroke-width="1.6" fill="none"/></svg>
<svg style="left:817.5px;top:238.5px;" width="11" height="11" viewBox="0 0 11 11"><path d="M0.5 10.5 L5.5 0.7 L10.5 10.5 M2.3 7 H8.7" stroke="#444746" stroke-width="1.5" fill="none"/></svg>
<div class="a" style="left:811.5px;top:252px;width:24px;height:4px;background:#000"></div>
<svg style="left:855px;top:235px;" width="17" height="14" viewBox="0 0 17 14"><path d="M4.5 1 L7 3.5 M2 8 L7.5 2.5 L12.5 7.5 L7 13 Z" fill="none" stroke="#444746" stroke-width="1.6" stroke-linejoin="round"/><path d="M2.5 8 H12 L7 13Z" fill="#444746"/><path d="M14.5 9 C15.8 11 16 12.5 14.5 12.5 C13 12.5 13.2 11 14.5 9Z" fill="#444746"/></svg>
<div class="a" style="left:853px;top:252px;width:23px;height:4px;background:#fff"></div>
<svg style="left:890.5px;top:240px;" width="15" height="14" viewBox="0 0 15 14"><rect x="1" y="1" width="13" height="12" fill="none" stroke="#444746" stroke-width="1.8"/><path d="M7.5 1 V13 M1 7 H14" stroke="#444746" stroke-width="1.6"/></svg>
<svg style="left:922.5px;top:240px;" width="17" height="14" viewBox="0 0 17 14"><path d="M1 4 V1 H5 M1 10 V13 H5 M16 4 V1 H12 M16 10 V13 H12 M4 7 H7 M5.7 5 L7.5 7 L5.7 9 M13 7 H10 M11.3 5 L9.5 7 L11.3 9" stroke="#b0b3b5" stroke-width="1.4" fill="none"/></svg>
<svg style="left:946px;top:245px;" width="9" height="4" viewBox="0 0 9 4"><path d="M0 0h9l-4.5 4z" fill="#b0b3b5"/></svg>
<svg style="left:972.5px;top:240px;" width="15" height="14" viewBox="0 0 15 14"><path d="M0 1 H15 M0 4.7 H10 M0 8.4 H15 M0 12.2 H10" stroke="#444746" stroke-width="1.5"/></svg>
<svg style="left:1014.5px;top:240px;" width="13" height="14" viewBox="0 0 13 14"><path d="M6.5 0.5 V9.5 M2.5 5.5 L6.5 9.5 L10.5 5.5 M0 13 H13" stroke="#444746" stroke-width="1.6" fill="none"/></svg>
<svg style="left:1055px;top:240px;" width="14" height="14" viewBox="0 0 14 14"><path d="M1 0 V14 M4.5 7 H12 M9.2 4 L12.3 7 L9.2 10 M5 1 V4 M5 10 V13" stroke="#444746" stroke-width="1.6" fill="none"/></svg>
<svg style="left:1096.5px;top:239px;" width="15" height="16" viewBox="0 0 15 16"><path d="M1 10.5 L5.5 0.8 L10 10.5 M2.8 7 H8.2 M0.5 13.5 H13 M10.8 11 L13.5 13.5 L10.8 16" stroke="#444746" stroke-width="1.4" fill="none"/></svg>
<svg style="left:994.5px;top:245px;" width="7.5" height="4" viewBox="0 0 7.5 4"><path d="M0 0h7.5l-3.75 4z" fill="#444746"/></svg>
<svg style="left:1035px;top:245px;" width="7.5" height="4" viewBox="0 0 7.5 4"><path d="M0 0h7.5l-3.75 4z" fill="#444746"/></svg>
<svg style="left:1076px;top:245px;" width="7.5" height="4" viewBox="0 0 7.5 4"><path d="M0 0h7.5l-3.75 4z" fill="#444746"/></svg>
<svg style="left:1117.5px;top:245px;" width="7.5" height="4" viewBox="0 0 7.5 4"><path d="M0 0h7.5l-3.75 4z" fill="#444746"/></svg>
<svg style="left:1293.5px;top:245px;" width="7.5" height="4" viewBox="0 0 7.5 4"><path d="M0 0h7.5l-3.75 4z" fill="#444746"/></svg>
<svg style="left:1144.5px;top:242.5px;" width="17" height="9" viewBox="0 0 17 9"><path d="M7 1 H4.5 C2.5 1 1 2.5 1 4.5 C1 6.5 2.5 8 4.5 8 H7 M10 1 H12.5 C14.5 1 16 2.5 16 4.5 C16 6.5 14.5 8 12.5 8 H10 M5 4.5 H12" stroke="#444746" stroke-width="1.7" fill="none"/></svg>
<svg style="left:1176.5px;top:239px;" width="17" height="17" viewBox="0 0 17 17"><path d="M1 1 H16 V12.5 H4.5 L1 16Z" fill="none" stroke="#444746" stroke-width="1.7" stroke-linejoin="round"/><path d="M8.5 3.5 V10 M5.2 6.8 H11.8" stroke="#444746" stroke-width="1.7"/></svg>
<svg style="left:1209.5px;top:240px;" width="15" height="15" viewBox="0 0 15 15"><rect x="1" y="1" width="13" height="13" rx="1" fill="none" stroke="#444746" stroke-width="1.7"/><path d="M4.5 6.5 V11 M7.5 4 V11 M10.5 8.5 V11" stroke="#444746" stroke-width="1.6"/></svg>
<svg style="left:1242.5px;top:240.5px;" width="13" height="12" viewBox="0 0 13 12"><path d="M0.8 1 H12.2 L7.8 6.2 V11.5 H5.2 V6.2Z" fill="none" stroke="#444746" stroke-width="1.6" stroke-linejoin="round"/></svg>
<svg style="left:1270px;top:239px;" width="17" height="17" viewBox="0 0 17 17"><path d="M1 13 V3 C1 1.9 1.9 1 3 1 H13" stroke="#444746" stroke-width="1.6" fill="none"/><rect x="4" y="4" width="12" height="12" rx="1" fill="none" stroke="#444746" stroke-width="1.7"/><path d="M4 8 H16" stroke="#444746" stroke-width="1.5"/><path d="M6.5 10.5h1.5M9.3 10.5h1.5M12 10.5h1.5M6.5 13.2h1.5M9.3 13.2h1.5M12 13.2h1.5" stroke="#444746" stroke-width="1.5"/></svg>
<svg style="left:1318px;top:241px;" width="10" height="11" viewBox="0 0 10 11"><path d="M9.5 1 H1 L5.5 5.5 L1 10 H9.5" stroke="#444746" stroke-width="1.6" fill="none" stroke-linejoin="miter"/></svg>
<svg style="left:1871px;top:244px;" width="10" height="6" viewBox="0 0 10 6"><path d="M1 5.5 L5 1.5 L9 5.5" stroke="#444746" stroke-width="1.6" fill="none"/></svg>
<div class="a" style="left:0px;top:274px;width:1919px;height:29px;background:#fff"></div>
<div class="t" style="left:14.6px;top:282.13px;font-size:12.6px;color:#1f1f1f;letter-spacing:-0.6px">L12</div>
<svg style="left:86px;top:286px;" width="8" height="4" viewBox="0 0 8 4"><path d="M0 0h8l-4 4z" fill="#444746"/></svg>
<div class="a" style="left:106px;top:280px;width:1px;height:17px;background:#c7c7c7"></div>
<div class="t" style="left:118px;top:280.88px;font-size:15.5px;color:#9aa0a6;font-family:'Liberation Serif',serif;font-style:italic;font-weight:bold">fx</div>
<div class="a" style="left:0px;top:303px;width:1909px;height:727px;background:#fff"></div>
<div class="a" style="left:45px;top:303px;width:1864px;height:23px;background:#fff"></div>
<div class="a" style="left:1445px;top:303px;width:100px;height:23px;background:#d3e3fd"></div>
<div class="a" style="left:0px;top:662px;width:45px;height:25px;background:#d3e3fd"></div>
<div class="a" style="left:0px;top:303px;width:45px;height:23px;background:#f8f9fa"></div>
<div class="a" style="left:41px;top:303px;width:4px;height:23px;background:#c0c0c0"></div>
<div class="a" style="left:0px;top:322px;width:45px;height:4px;background:#c0c0c0"></div>
<div class="a" style="left:0px;top:302px;width:1909px;height:1px;background:#c4c7c5"></div>
<div class="a" style="left:45px;top:326px;width:1864px;height:1px;background:#c4c7c5"></div>
<div class="a" style="left:45px;top:303px;width:1px;height:23px;background:#c4c7c5"></div>
<div class="a" style="left:146px;top:303px;width:1px;height:23px;background:#c4c7c5"></div>
<div class="a" style="left:247px;top:303px;width:1px;height:23px;background:#c4c7c5"></div>
<div class="a" style="left:444px;top:303px;width:1px;height:23px;background:#c4c7c5"></div>
<div class="a" style="left:683px;top:303px;width:1px;height:23px;background:#c4c7c5"></div>
<div class="a" style="left:813px;top:303px;width:1px;height:23px;background:#c4c7c5"></div>
<div class="a" style="left:914px;top:303px;width:1px;height:23px;background:#c4c7c5"></div>
<div class="a" style="left:1018px;top:303px;width:1px;height:23px;background:#c4c7c5"></div>
<div class="a" style="left:1141px;top:303px;width:1px;height:23px;background:#c4c7c5"></div>
<div class="a" style="left:1242px;top:303px;width:1px;height:23px;background:#c4c7c5"></div>
<div class="a" style="left:1343px;top:303px;width:1px;height:23px;background:#c4c7c5"></div>
<div class="a" style="left:1444px;top:303px;width:1px;height:23px;background:#c4c7c5"></div>
<div class="a" style="left:1545px;top:303px;width:1px;height:23px;background:#c4c7c5"></div>
<div class="a" style="left:1646px;top:303px;width:1px;height:23px;background:#c4c7c5"></div>
<div class="a" style="left:1747px;top:303px;width:1px;height:23px;background:#c4c7c5"></div>
<div class="a" style="left:1848px;top:303px;width:1px;height:23px;background:#c4c7c5"></div>
<div class="a" style="left:45px;top:303px;width:1px;height:727px;background:#c4c7c5"></div>
<div class="a" style="left:0px;top:347px;width:45px;height:1px;background:#c4c7c5"></div>
<div class="a" style="left:46px;top:347px;width:1863px;height:1px;background:#e1e1e1"></div>
<div class="a" style="left:0px;top:368px;width:45px;height:1px;background:#c4c7c5"></div>
<div class="a" style="left:46px;top:368px;width:1863px;height:1px;background:#e1e1e1"></div>
<div class="a" style="left:0px;top:402px;width:45px;height:1px;background:#c4c7c5"></div>
<div class="a" style="left:46px;top:402px;width:1863px;height:1px;background:#e1e1e1"></div>
<div class="a" style="left:0px;top:436px;width:45px;height:1px;background:#c4c7c5"></div>
<div class="a" style="left:46px;top:436px;width:1863px;height:1px;background:#e1e1e1"></div>
<div class="a" style="left:0px;top:467px;width:45px;height:1px;background:#c4c7c5"></div>
<div class="a" style="left:46px;top:467px;width:1863px;height:1px;background:#e1e1e1"></div>
<div class="a" style="left:0px;top:488px;width:45px;height:1px;background:#c4c7c5"></div>
<div class="a" style="left:46px;top:488px;width:1863px;height:1px;background:#e1e1e1"></div>
<div class="a" style="left:0px;top:557px;width:45px;height:1px;background:#c4c7c5"></div>
<div class="a" style="left:46px;top:557px;width:1863px;height:1px;background:#e1e1e1"></div>
<div class="a" style="left:0px;top:583px;width:45px;height:1px;background:#c4c7c5"></div>
<div class="a" style="left:46px;top:583px;width:1863px;height:1px;background:#e1e1e1"></div>
<div class="a" style="left:0px;top:609px;width:45px;height:1px;background:#c4c7c5"></div>
<div class="a" style="left:46px;top:609px;width:1863px;height:1px;background:#e1e1e1"></div>
<div class="a" style="left:0px;top:635px;width:45px;height:1px;background:#c4c7c5"></div>
<div class="a" style="left:46px;top:635px;width:1863px;height:1px;background:#e1e1e1"></div>
<div class="a" style="left:0px;top:661px;width:45px;height:1px;background:#c4c7c5"></div>
<div class="a" style="left:46px;top:661px;width:1863px;height:1px;background:#e1e1e1"></div>
<div class="a" style="left:0px;top:687px;width:45px;height:1px;background:#c4c7c5"></div>
<div class="a" style="left:46px;top:687px;width:1863px;height:1px;background:#e1e1e1"></div>
<div class="a" style="left:0px;top:713px;width:45px;height:1px;background:#c4c7c5"></div>
<div class="a" style="left:46px;top:713px;width:1863px;height:1px;background:#e1e1e1"></div>
<div class="a" style="left:0px;top:739px;width:45px;height:1px;background:#c4c7c5"></div>
<div class="a" style="left:46px;top:739px;width:1863px;height:1px;background:#e1e1e1"></div>
<div class="a" style="left:0px;top:765px;width:45px;height:1px;background:#c4c7c5"></div>
<div class="a" style="left:46px;top:765px;width:1863px;height:1px;background:#e1e1e1"></div>
<div class="a" style="left:0px;top:791px;width:45px;height:1px;background:#c4c7c5"></div>
<div class="a" style="left:46px;top:791px;width:1863px;height:1px;background:#e1e1e1"></div>
<div class="a" style="left:0px;top:817px;width:45px;height:1px;background:#c4c7c5"></div>
<div class="a" style="left:46px;top:817px;width:1863px;height:1px;background:#e1e1e1"></div>
<div class="a" style="left:0px;top:843px;width:45px;height:1px;background:#c4c7c5"></div>
<div class="a" style="left:46px;top:843px;width:1863px;height:1px;background:#e1e1e1"></div>
<div class="a" style="left:0px;top:869px;width:45px;height:1px;background:#c4c7c5"></div>
<div class="a" style="left:46px;top:869px;width:1863px;height:1px;background:#e1e1e1"></div>
<div class="a" style="left:0px;top:895px;width:45px;height:1px;background:#c4c7c5"></div>
<div class="a" style="left:46px;top:895px;width:1863px;height:1px;background:#e1e1e1"></div>
<div class="a" style="left:0px;top:921px;width:45px;height:1px;background:#c4c7c5"></div>
<div class="a" style="left:46px;top:921px;width:1863px;height:1px;background:#e1e1e1"></div>
<div class="a" style="left:0px;top:947px;width:45px;height:1px;background:#c4c7c5"></div>
<div class="a" style="left:46px;top:947px;width:1863px;height:1px;background:#e1e1e1"></div>
<div class="a" style="left:0px;top:973px;width:45px;height:1px;background:#c4c7c5"></div>
<div class="a" style="left:46px;top:973px;width:1863px;height:1px;background:#e1e1e1"></div>
<div class="a" style="left:0px;top:999px;width:45px;height:1px;background:#c4c7c5"></div>
<div class="a" style="left:46px;top:999px;width:1863px;height:1px;background:#e1e1e1"></div>
<div class="a" style="left:0px;top:1025px;width:45px;height:1px;background:#c4c7c5"></div>
<div class="a" style="left:46px;top:1025px;width:1863px;height:1px;background:#e1e1e1"></div>
<div class="a" style="left:0px;top:1051px;width:45px;height:1px;background:#c4c7c5"></div>
<div class="a" style="left:46px;top:1051px;width:1863px;height:1px;background:#e1e1e1"></div>
<div class="a" style="left:146px;top:327px;width:1px;height:703px;background:#e1e1e1"></div>
<div class="a" style="left:247px;top:327px;width:1px;height:703px;background:#e1e1e1"></div>
<div class="a" style="left:444px;top:327px;width:1px;height:703px;background:#e1e1e1"></div>
<div class="a" style="left:683px;top:327px;width:1px;height:703px;background:#e1e1e1"></div>
<div class="a" style="left:813px;top:327px;width:1px;height:703px;background:#e1e1e1"></div>
<div class="a" style="left:914px;top:327px;width:1px;height:703px;background:#e1e1e1"></div>
<div class="a" style="left:1018px;top:327px;width:1px;height:703px;background:#e1e1e1"></div>
<div class="a" style="left:1141px;top:327px;width:1px;height:703px;background:#e1e1e1"></div>
<div class="a" style="left:1242px;top:327px;width:1px;height:703px;background:#e1e1e1"></div>
<div class="a" style="left:1343px;top:327px;width:1px;height:703px;background:#e1e1e1"></div>
<div class="a" style="left:1444px;top:327px;width:1px;height:703px;background:#e1e1e1"></div>
<div class="a" style="left:1545px;top:327px;width:1px;height:703px;background:#e1e1e1"></div>
<div class="a" style="left:1646px;top:327px;width:1px;height:703px;background:#e1e1e1"></div>
<div class="a" style="left:1747px;top:327px;width:1px;height:703px;background:#e1e1e1"></div>
<div class="a" style="left:1848px;top:327px;width:1px;height:703px;background:#e1e1e1"></div>
<div class="t" style="left:-204.5px;width:600px;text-align:center;top:308.69px;font-size:11px;color:#444;">A</div>
<div class="t" style="left:-103.5px;width:600px;text-align:center;top:308.69px;font-size:11px;color:#444;">B</div>
<div class="t" style="left:45.5px;width:600px;text-align:center;top:308.69px;font-size:11px;color:#444;">C</div>
<div class="t" style="left:263.5px;width:600px;text-align:center;top:308.69px;font-size:11px;color:#444;">D</div>
<div class="t" style="left:448.0px;width:600px;text-align:center;top:308.69px;font-size:11px;color:#444;">E</div>
<div class="t" style="left:563.5px;width:600px;text-align:center;top:308.69px;font-size:11px;color:#444;">F</div>
<div class="t" style="left:666.0px;width:600px;text-align:center;top:308.69px;font-size:11px;color:#444;">G</div>
<div class="t" style="left:779.5px;width:600px;text-align:center;top:308.69px;font-size:11px;color:#444;">H</div>
<div class="t" style="left:891.5px;width:600px;text-align:center;top:308.69px;font-size:11px;color:#444;">I</div>
<div class="t" style="left:992.5px;width:600px;text-align:center;top:308.69px;font-size:11px;color:#444;">J</div>
<div class="t" style="left:1093.5px;width:600px;text-align:center;top:308.69px;font-size:11px;color:#444;">K</div>
<div class="t" style="left:1194.5px;width:600px;text-align:center;top:308.69px;font-size:11px;color:#0b2a63;font-weight:bold;">L</div>
<div class="t" style="left:1295.5px;width:600px;text-align:center;top:308.69px;font-size:11px;color:#444;">M</div>
<div class="t" style="left:1396.5px;width:600px;text-align:center;top:308.69px;font-size:11px;color:#444;">N</div>
<div class="t" style="left:1497.5px;width:600px;text-align:center;top:308.69px;font-size:11px;color:#444;">O</div>
<div class="t" style="left:1599px;width:600px;text-align:center;top:308.69px;font-size:11px;color:#444;">P</div>
<svg style="left:1000px;top:312px;" width="9" height="5" viewBox="0 0 9 5"><path d="M0 0h9l-4.5 5z" fill="#444"/></svg>
<div class="t" style="left:-277.5px;width:600px;text-align:center;top:331.19px;font-size:11px;color:#444;">1</div>
<div class="t" style="left:-277.5px;width:600px;text-align:center;top:352.19px;font-size:11px;color:#444;">2</div>
<div class="t" style="left:-277.5px;width:600px;text-align:center;top:379.69px;font-size:11px;color:#444;">3</div>
<div class="t" style="left:-277.5px;width:600px;text-align:center;top:413.69px;font-size:11px;color:#444;">4</div>
<div class="t" style="left:-277.5px;width:600px;text-align:center;top:446.19px;font-size:11px;color:#444;">5</div>
<div class="t" style="left:-277.5px;width:600px;text-align:center;top:472.19px;font-size:11px;color:#444;">6</div>
<div class="t" style="left:-277.5px;width:600px;text-align:center;top:517.19px;font-size:11px;color:#444;">7</div>
<div class="t" style="left:-277.5px;width:600px;text-align:center;top:564.69px;font-size:11px;color:#444;">8</div>
<div class="t" style="left:-277.5px;width:600px;text-align:center;top:590.69px;font-size:11px;color:#444;">9</div>
<div class="t" style="left:-277.5px;width:600px;text-align:center;top:616.69px;font-size:11px;color:#444;">10</div>
<div class="t" style="left:-277.5px;width:600px;text-align:center;top:642.69px;font-size:11px;color:#444;">11</div>
<div class="t" style="left:-277.5px;width:600px;text-align:center;top:668.69px;font-size:11px;color:#0b2a63;font-weight:bold;">12</div>
<div class="t" style="left:-277.5px;width:600px;text-align:center;top:694.69px;font-size:11px;color:#444;">13</div>
<div class="t" style="left:-277.5px;width:600px;text-align:center;top:720.69px;font-size:11px;color:#444;">14</div>
<div class="t" style="left:-277.5px;width:600px;text-align:center;top:746.69px;font-size:11px;color:#444;">15</div>
<div class="t" style="left:-277.5px;width:600px;text-align:center;top:772.69px;font-size:11px;color:#444;">16</div>
<div class="t" style="left:-277.5px;width:600px;text-align:center;top:798.69px;font-size:11px;color:#444;">17</div>
<div class="t" style="left:-277.5px;width:600px;text-align:center;top:824.69px;font-size:11px;color:#444;">18</div>
<div class="t" style="left:-277.5px;width:600px;text-align:center;top:850.69px;font-size:11px;color:#444;">19</div>
<div class="t" style="left:-277.5px;width:600px;text-align:center;top:876.69px;font-size:11px;color:#444;">20</div>
<div class="t" style="left:-277.5px;width:600px;text-align:center;top:902.69px;font-size:11px;color:#444;">21</div>
<div class="t" style="left:-277.5px;width:600px;text-align:center;top:928.69px;font-size:11px;color:#444;">22</div>
<div class="t" style="left:-277.5px;width:600px;text-align:center;top:954.69px;font-size:11px;color:#444;">23</div>
<div class="t" style="left:-277.5px;width:600px;text-align:center;top:980.69px;font-size:11px;color:#444;">24</div>
<div class="t" style="left:-277.5px;width:600px;text-align:center;top:1006.69px;font-size:11px;color:#444;">25</div>
<div class="a" style="left:247px;top:368px;width:197px;height:34px;background:#ffff00"></div>
<div class="a" style="left:444px;top:368px;width:239px;height:34px;background:#ffff00"></div>
<div class="a" style="left:247px;top:402px;width:197px;height:34px;background:#3c78d8"></div>
<div class="a" style="left:444px;top:402px;width:239px;height:34px;background:#3c78d8"></div>
<div class="a" style="left:247px;top:436px;width:197px;height:31px;background:#ffd966"></div>
<div class="a" style="left:444px;top:436px;width:239px;height:31px;background:#ffd966"></div>
<div class="a" style="left:247px;top:368px;width:437px;height:1px;background:#000"></div>
<div class="a" style="left:247px;top:402px;width:437px;height:1px;background:#000"></div>
<div class="a" style="left:247px;top:436px;width:437px;height:1px;background:#000"></div>
<div class="a" style="left:247px;top:467px;width:437px;height:1px;background:#000"></div>
<div class="a" style="left:247px;top:368px;width:1px;height:100px;background:#000"></div>
<div class="a" style="left:444px;top:368px;width:1px;height:100px;background:#000"></div>
<div class="a" style="left:683px;top:368px;width:1px;height:100px;background:#000"></div>
<div class="t" style="left:252px;top:374.07px;font-size:23.9px;color:#000;">Targeted keyword</div>
<div class="t" style="left:264px;width:600px;text-align:center;top:373.90px;font-size:24.1px;color:#000;">Welder machine</div>
<div class="t" style="left:251.5px;top:408.43px;font-size:24.3px;color:#000;">Location</div>
<div class="t" style="left:264px;width:600px;text-align:center;top:408.60px;font-size:24.1px;color:#000;">USA</div>
<div class="t" style="left:252px;top:443.19px;font-size:20.8px;color:#000;">Tools</div>
<div class="t" style="left:264px;width:600px;text-align:center;top:442.77px;font-size:21.3px;color:#000;">Ubersuggest</div>
<div class="a" style="left:146px;top:488px;width:995px;height:69px;background:#ffff00"></div>
<div class="t" style="left:-103.5px;width:600px;text-align:center;top:494.31px;font-size:26.8px;color:#000;">Serial</div>
<div class="t" style="left:45.5px;width:600px;text-align:center;top:494.31px;font-size:26.8px;color:#000;">Services main</div>
<div class="t" style="left:45.5px;width:600px;text-align:center;top:526.31px;font-size:26.8px;color:#000;">keyword</div>
<div class="t" style="left:263.5px;width:600px;text-align:center;top:494.31px;font-size:26.8px;color:#000;">Keyword research</div>
<div class="t" style="left:448px;width:600px;text-align:center;top:494.31px;font-size:26.8px;color:#000;">Location</div>
<div class="t" style="left:563.5px;width:600px;text-align:center;top:494.31px;font-size:26.8px;color:#000;">KD</div>
<div class="t" style="left:666px;width:600px;text-align:center;top:494.31px;font-size:26.8px;color:#000;">Search</div>
<div class="t" style="left:666px;width:600px;text-align:center;top:526.31px;font-size:26.8px;color:#000;">volume</div>
<div class="t" style="left:779.5px;width:600px;text-align:center;top:494.31px;font-size:26.8px;color:#000;">Keyword</div>
<div class="t" style="left:779.5px;width:600px;text-align:center;top:526.31px;font-size:26.8px;color:#000;">State</div>
<div class="a" style="left:146px;top:557px;width:995px;height:26px;background:#fff"></div>
<div class="a" style="left:446px;top:559px;width:236px;height:23px;background:#f6f6f6"></div>
<div class="a" style="left:916px;top:559px;width:101px;height:23px;background:#f6f6f6"></div>
<div class="t" style="left:-102.80000000000001px;width:600px;text-align:center;top:563.78px;font-size:16.8px;color:#000;">1</div>
<div class="t" style="left:448px;top:564.58px;font-size:14.67px;color:#d26a50;">welder machine</div>
<div class="t" style="left:448.5px;width:600px;text-align:center;top:563.36px;font-size:17.3px;color:#000;">USA</div>
<div class="t" style="left:564px;width:600px;text-align:center;top:568.13px;font-size:12.6px;color:#000;">14</div>
<div class="t" style="left:666px;width:600px;text-align:center;top:564.42px;font-size:15.1px;color:#333333;">33,100</div>
<div class="a" style="left:1028px;top:565px;width:104px;height:16px;background:#11734b;border-radius:8px"></div>
<div class="t" style="left:1034.5px;top:566.66px;font-size:13.4px;color:#cdf2b8;">Medium</div>
<svg style="left:1117px;top:570.5px;" width="8" height="5" viewBox="0 0 8 5"><path d="M0 0h8l-4 5z" fill="#cdf2b8"/></svg>
<div class="a" style="left:146px;top:583px;width:995px;height:26px;background:#fff"></div>
<div class="a" style="left:446px;top:585px;width:236px;height:23px;background:#f6f6f6"></div>
<div class="a" style="left:916px;top:585px;width:101px;height:23px;background:#f6f6f6"></div>
<div class="t" style="left:-102.80000000000001px;width:600px;text-align:center;top:589.78px;font-size:16.8px;color:#000;">2</div>
<div class="t" style="left:448px;top:590.58px;font-size:14.67px;color:#d26a50;">welding machine laser</div>
<div class="t" style="left:448.5px;width:600px;text-align:center;top:589.36px;font-size:17.3px;color:#000;">USA</div>
<div class="t" style="left:564px;width:600px;text-align:center;top:594.13px;font-size:12.6px;color:#000;">4</div>
<div class="t" style="left:666px;width:600px;text-align:center;top:590.42px;font-size:15.1px;color:#333333;">18,100</div>
<div class="a" style="left:1028px;top:591px;width:104px;height:16px;background:#8bcf50;border-radius:8px"></div>
<div class="t" style="left:1034.5px;top:592.66px;font-size:13.4px;color:#11734b;">Easy</div>
<svg style="left:1117px;top:596.5px;" width="8" height="5" viewBox="0 0 8 5"><path d="M0 0h8l-4 5z" fill="#11734b"/></svg>
<div class="a" style="left:146px;top:609px;width:995px;height:26px;background:#fff"></div>
<div class="a" style="left:446px;top:611px;width:236px;height:23px;background:#fafafa"></div>
<div class="a" style="left:916px;top:611px;width:101px;height:23px;background:#fafafa"></div>
<div class="t" style="left:-102.80000000000001px;width:600px;text-align:center;top:615.78px;font-size:16.8px;color:#000;">3</div>
<div class="t" style="left:448px;top:616.58px;font-size:14.67px;color:#d26a50;">mig welding machine</div>
<div class="t" style="left:448.5px;width:600px;text-align:center;top:615.36px;font-size:17.3px;color:#000;">USA</div>
<div class="t" style="left:564px;width:600px;text-align:center;top:620.13px;font-size:12.6px;color:#000;">10</div>
<div class="t" style="left:666px;width:600px;text-align:center;top:616.42px;font-size:15.1px;color:#333333;">4,400</div>
<div class="a" style="left:1028px;top:617px;width:104px;height:16px;background:#8bcf50;border-radius:8px"></div>
<div class="t" style="left:1034.5px;top:618.66px;font-size:13.4px;color:#11734b;">Easy</div>
<svg style="left:1117px;top:622.5px;" width="8" height="5" viewBox="0 0 8 5"><path d="M0 0h8l-4 5z" fill="#11734b"/></svg>
<div class="a" style="left:146px;top:635px;width:995px;height:26px;background:#fff"></div>
<div class="a" style="left:446px;top:637px;width:236px;height:23px;background:#f6f6f6"></div>
<div class="a" style="left:916px;top:637px;width:101px;height:23px;background:#f6f6f6"></div>
<div class="t" style="left:-102.80000000000001px;width:600px;text-align:center;top:641.78px;font-size:16.8px;color:#000;">4</div>
<div class="t" style="left:448px;top:642.58px;font-size:14.67px;color:#d26a50;">welding machine lincoln</div>
<div class="t" style="left:448.5px;width:600px;text-align:center;top:641.36px;font-size:17.3px;color:#000;">USA</div>
<div class="t" style="left:564px;width:600px;text-align:center;top:646.13px;font-size:12.6px;color:#000;">2</div>
<div class="t" style="left:666px;width:600px;text-align:center;top:642.42px;font-size:15.1px;color:#333333;">4,400</div>
<div class="a" style="left:1028px;top:643px;width:104px;height:16px;background:#8bcf50;border-radius:8px"></div>
<div class="t" style="left:1034.5px;top:644.66px;font-size:13.4px;color:#11734b;">Easy</div>
<svg style="left:1117px;top:648.5px;" width="8" height="5" viewBox="0 0 8 5"><path d="M0 0h8l-4 5z" fill="#11734b"/></svg>
<div class="a" style="left:146px;top:661px;width:995px;height:26px;background:#fff"></div>
<div class="a" style="left:446px;top:663px;width:236px;height:23px;background:#fafafa"></div>
<div class="a" style="left:916px;top:663px;width:101px;height:23px;background:#fafafa"></div>
<div class="t" style="left:-102.80000000000001px;width:600px;text-align:center;top:667.78px;font-size:16.8px;color:#000;">5</div>
<div class="t" style="left:448px;top:668.58px;font-size:14.67px;color:#d26a50;">welding machine mig</div>
<div class="t" style="left:448.5px;width:600px;text-align:center;top:667.36px;font-size:17.3px;color:#000;">USA</div>
<div class="t" style="left:564px;width:600px;text-align:center;top:672.13px;font-size:12.6px;color:#000;">9</div>
<div class="t" style="left:666px;width:600px;text-align:center;top:668.42px;font-size:15.1px;color:#333333;">3,600</div>
<div class="a" style="left:1028px;top:669px;width:104px;height:16px;background:#8bcf50;border-radius:8px"></div>
<div class="t" style="left:1034.5px;top:670.66px;font-size:13.4px;color:#11734b;">Easy</div>
<svg style="left:1117px;top:674.5px;" width="8" height="5" viewBox="0 0 8 5"><path d="M0 0h8l-4 5z" fill="#11734b"/></svg>
<div class="a" style="left:146px;top:687px;width:995px;height:26px;background:#fff"></div>
<div class="a" style="left:446px;top:689px;width:236px;height:23px;background:#f6f6f6"></div>
<div class="a" style="left:916px;top:689px;width:101px;height:23px;background:#f6f6f6"></div>
<div class="t" style="left:-102.80000000000001px;width:600px;text-align:center;top:693.78px;font-size:16.8px;color:#000;">6</div>
<div class="t" style="left:448px;top:694.58px;font-size:14.67px;color:#d26a50;">welding machine stick</div>
<div class="t" style="left:448.5px;width:600px;text-align:center;top:693.36px;font-size:17.3px;color:#000;">USA</div>
<div class="t" style="left:564px;width:600px;text-align:center;top:698.13px;font-size:12.6px;color:#000;">3</div>
<div class="t" style="left:666px;width:600px;text-align:center;top:694.42px;font-size:15.1px;color:#333333;">2,900</div>
<div class="a" style="left:1028px;top:695px;width:104px;height:16px;background:#8bcf50;border-radius:8px"></div>
<div class="t" style="left:1034.5px;top:696.66px;font-size:13.4px;color:#11734b;">Easy</div>
<svg style="left:1117px;top:700.5px;" width="8" height="5" viewBox="0 0 8 5"><path d="M0 0h8l-4 5z" fill="#11734b"/></svg>
<div class="a" style="left:146px;top:713px;width:995px;height:26px;background:#fff"></div>
<div class="a" style="left:446px;top:715px;width:236px;height:23px;background:#fafafa"></div>
<div class="a" style="left:916px;top:715px;width:101px;height:23px;background:#fafafa"></div>
<div class="t" style="left:-102.80000000000001px;width:600px;text-align:center;top:719.78px;font-size:16.8px;color:#000;">7</div>
<div class="t" style="left:448px;top:720.58px;font-size:14.67px;color:#d26a50;">welder machine harbor freight</div>
<div class="t" style="left:448.5px;width:600px;text-align:center;top:719.36px;font-size:17.3px;color:#000;">USA</div>
<div class="t" style="left:564px;width:600px;text-align:center;top:724.13px;font-size:12.6px;color:#000;">1</div>
<div class="t" style="left:666px;width:600px;text-align:center;top:720.42px;font-size:15.1px;color:#333333;">2,400</div>
<div class="a" style="left:1028px;top:721px;width:104px;height:16px;background:#8bcf50;border-radius:8px"></div>
<div class="t" style="left:1034.5px;top:722.66px;font-size:13.4px;color:#11734b;">Easy</div>
<svg style="left:1117px;top:726.5px;" width="8" height="5" viewBox="0 0 8 5"><path d="M0 0h8l-4 5z" fill="#11734b"/></svg>
<div class="a" style="left:146px;top:739px;width:995px;height:26px;background:#fff"></div>
<div class="a" style="left:446px;top:741px;width:236px;height:23px;background:#f6f6f6"></div>
<div class="a" style="left:916px;top:741px;width:101px;height:23px;background:#f6f6f6"></div>
<div class="t" style="left:-102.80000000000001px;width:600px;text-align:center;top:745.78px;font-size:16.8px;color:#000;">8</div>
<div class="t" style="left:448px;top:746.58px;font-size:14.67px;color:#d26a50;">welding machine lowes</div>
<div class="t" style="left:448.5px;width:600px;text-align:center;top:745.36px;font-size:17.3px;color:#000;">USA</div>
<div class="t" style="left:564px;width:600px;text-align:center;top:750.13px;font-size:12.6px;color:#000;">2</div>
<div class="t" style="left:666px;width:600px;text-align:center;top:746.42px;font-size:15.1px;color:#333333;">1,900</div>
<div class="a" style="left:1028px;top:747px;width:104px;height:16px;background:#8bcf50;border-radius:8px"></div>
<div class="t" style="left:1034.5px;top:748.66px;font-size:13.4px;color:#11734b;">Easy</div>
<svg style="left:1117px;top:752.5px;" width="8" height="5" viewBox="0 0 8 5"><path d="M0 0h8l-4 5z" fill="#11734b"/></svg>
<div class="a" style="left:146px;top:765px;width:995px;height:26px;background:#fff"></div>
<div class="a" style="left:446px;top:767px;width:236px;height:23px;background:#fafafa"></div>
<div class="a" style="left:916px;top:767px;width:101px;height:23px;background:#fafafa"></div>
<div class="t" style="left:-102.80000000000001px;width:600px;text-align:center;top:771.78px;font-size:16.8px;color:#000;">9</div>
<div class="t" style="left:448px;top:772.58px;font-size:14.67px;color:#d26a50;">welding machine portable</div>
<div class="t" style="left:448.5px;width:600px;text-align:center;top:771.36px;font-size:17.3px;color:#000;">USA</div>
<div class="t" style="left:564px;width:600px;text-align:center;top:776.13px;font-size:12.6px;color:#000;">0</div>
<div class="t" style="left:666px;width:600px;text-align:center;top:772.42px;font-size:15.1px;color:#333333;">1,900</div>
<div class="a" style="left:1028px;top:773px;width:104px;height:16px;background:#8bcf50;border-radius:8px"></div>
<div class="t" style="left:1034.5px;top:774.66px;font-size:13.4px;color:#11734b;">Easy</div>
<svg style="left:1117px;top:778.5px;" width="8" height="5" viewBox="0 0 8 5"><path d="M0 0h8l-4 5z" fill="#11734b"/></svg>
<div class="a" style="left:146px;top:791px;width:995px;height:26px;background:#fff"></div>
<div class="a" style="left:446px;top:793px;width:236px;height:23px;background:#f6f6f6"></div>
<div class="a" style="left:916px;top:793px;width:101px;height:23px;background:#f6f6f6"></div>
<div class="t" style="left:-102.80000000000001px;width:600px;text-align:center;top:797.78px;font-size:16.8px;color:#000;">10</div>
<div class="t" style="left:448px;top:798.58px;font-size:14.67px;color:#d26a50;">welder machine for rent</div>
<div class="t" style="left:448.5px;width:600px;text-align:center;top:797.36px;font-size:17.3px;color:#000;">USA</div>
<div class="t" style="left:564px;width:600px;text-align:center;top:802.13px;font-size:12.6px;color:#000;">0</div>
<div class="t" style="left:666px;width:600px;text-align:center;top:798.42px;font-size:15.1px;color:#333333;">1,600</div>
<div class="a" style="left:1028px;top:799px;width:104px;height:16px;background:#8bcf50;border-radius:8px"></div>
<div class="t" style="left:1034.5px;top:800.66px;font-size:13.4px;color:#11734b;">Easy</div>
<svg style="left:1117px;top:804.5px;" width="8" height="5" viewBox="0 0 8 5"><path d="M0 0h8l-4 5z" fill="#11734b"/></svg>
<div class="a" style="left:146px;top:817px;width:995px;height:26px;background:#fff"></div>
<div class="a" style="left:446px;top:819px;width:236px;height:23px;background:#fafafa"></div>
<div class="a" style="left:916px;top:819px;width:101px;height:23px;background:#fafafa"></div>
<div class="t" style="left:-102.80000000000001px;width:600px;text-align:center;top:823.78px;font-size:16.8px;color:#000;">11</div>
<div class="t" style="left:448px;top:824.58px;font-size:14.67px;color:#d26a50;">welding machine aluminium</div>
<div class="t" style="left:448.5px;width:600px;text-align:center;top:823.36px;font-size:17.3px;color:#000;">USA</div>
<div class="t" style="left:564px;width:600px;text-align:center;top:828.13px;font-size:12.6px;color:#000;">1</div>
<div class="t" style="left:666px;width:600px;text-align:center;top:824.42px;font-size:15.1px;color:#333333;">1,600</div>
<div class="a" style="left:1028px;top:825px;width:104px;height:16px;background:#8bcf50;border-radius:8px"></div>
<div class="t" style="left:1034.5px;top:826.66px;font-size:13.4px;color:#11734b;">Easy</div>
<svg style="left:1117px;top:830.5px;" width="8" height="5" viewBox="0 0 8 5"><path d="M0 0h8l-4 5z" fill="#11734b"/></svg>
<div class="a" style="left:146px;top:843px;width:995px;height:26px;background:#fff"></div>
<div class="a" style="left:446px;top:845px;width:236px;height:23px;background:#f6f6f6"></div>
<div class="a" style="left:916px;top:845px;width:101px;height:23px;background:#f6f6f6"></div>
<div class="t" style="left:-102.80000000000001px;width:600px;text-align:center;top:849.78px;font-size:16.8px;color:#000;">12</div>
<div class="t" style="left:448px;top:850.58px;font-size:14.67px;color:#d26a50;">welding machine gas</div>
<div class="t" style="left:448.5px;width:600px;text-align:center;top:849.36px;font-size:17.3px;color:#000;">USA</div>
<div class="t" style="left:564px;width:600px;text-align:center;top:854.13px;font-size:12.6px;color:#000;">0</div>
<div class="t" style="left:666px;width:600px;text-align:center;top:850.42px;font-size:15.1px;color:#333333;">1,300</div>
<div class="a" style="left:1028px;top:851px;width:104px;height:16px;background:#8bcf50;border-radius:8px"></div>
<div class="t" style="left:1034.5px;top:852.66px;font-size:13.4px;color:#11734b;">Easy</div>
<svg style="left:1117px;top:856.5px;" width="8" height="5" viewBox="0 0 8 5"><path d="M0 0h8l-4 5z" fill="#11734b"/></svg>
<div class="a" style="left:146px;top:869px;width:995px;height:26px;background:#fff"></div>
<div class="a" style="left:446px;top:871px;width:236px;height:23px;background:#fafafa"></div>
<div class="a" style="left:916px;top:871px;width:101px;height:23px;background:#fafafa"></div>
<div class="t" style="left:-102.80000000000001px;width:600px;text-align:center;top:875.78px;font-size:16.8px;color:#000;">13</div>
<div class="t" style="left:448px;top:876.58px;font-size:14.67px;color:#d26a50;">welder machine repair near me</div>
<div class="t" style="left:448.5px;width:600px;text-align:center;top:875.36px;font-size:17.3px;color:#000;">USA</div>
<div class="t" style="left:564px;width:600px;text-align:center;top:880.13px;font-size:12.6px;color:#000;">0</div>
<div class="t" style="left:666px;width:600px;text-align:center;top:876.42px;font-size:15.1px;color:#333333;">880</div>
<div class="a" style="left:1028px;top:877px;width:104px;height:16px;background:#8bcf50;border-radius:8px"></div>
<div class="t" style="left:1034.5px;top:878.66px;font-size:13.4px;color:#11734b;">Easy</div>
<svg style="left:1117px;top:882.5px;" width="8" height="5" viewBox="0 0 8 5"><path d="M0 0h8l-4 5z" fill="#11734b"/></svg>
<div class="a" style="left:146px;top:895px;width:995px;height:26px;background:#fff"></div>
<div class="a" style="left:446px;top:897px;width:236px;height:23px;background:#f6f6f6"></div>
<div class="a" style="left:916px;top:897px;width:101px;height:23px;background:#f6f6f6"></div>
<div class="t" style="left:-102.80000000000001px;width:600px;text-align:center;top:901.78px;font-size:16.8px;color:#000;">14</div>
<div class="t" style="left:448px;top:902.58px;font-size:14.67px;color:#d26a50;">welding machine arc</div>
<div class="t" style="left:448.5px;width:600px;text-align:center;top:901.36px;font-size:17.3px;color:#000;">USA</div>
<div class="t" style="left:564px;width:600px;text-align:center;top:906.13px;font-size:12.6px;color:#000;">5</div>
<div class="t" style="left:666px;width:600px;text-align:center;top:902.42px;font-size:15.1px;color:#333333;">880</div>
<div class="a" style="left:1028px;top:903px;width:104px;height:16px;background:#8bcf50;border-radius:8px"></div>
<div class="t" style="left:1034.5px;top:904.66px;font-size:13.4px;color:#11734b;">Easy</div>
<svg style="left:1117px;top:908.5px;" width="8" height="5" viewBox="0 0 8 5"><path d="M0 0h8l-4 5z" fill="#11734b"/></svg>
<div class="a" style="left:146px;top:921px;width:995px;height:26px;background:#fff"></div>
<div class="a" style="left:446px;top:923px;width:236px;height:23px;background:#fafafa"></div>
<div class="a" style="left:916px;top:923px;width:101px;height:23px;background:#fafafa"></div>
<div class="t" style="left:-102.80000000000001px;width:600px;text-align:center;top:927.78px;font-size:16.8px;color:#000;">15</div>
<div class="t" style="left:448px;top:928.58px;font-size:14.67px;color:#d26a50;">welding machine electric</div>
<div class="t" style="left:448.5px;width:600px;text-align:center;top:927.36px;font-size:17.3px;color:#000;">USA</div>
<div class="t" style="left:564px;width:600px;text-align:center;top:932.13px;font-size:12.6px;color:#000;">24</div>
<div class="t" style="left:666px;width:600px;text-align:center;top:928.42px;font-size:15.1px;color:#333333;">880</div>
<div class="a" style="left:1028px;top:929px;width:104px;height:16px;background:#11734b;border-radius:8px"></div>
<div class="t" style="left:1034.5px;top:930.66px;font-size:13.4px;color:#cdf2b8;">Medium</div>
<svg style="left:1117px;top:934.5px;" width="8" height="5" viewBox="0 0 8 5"><path d="M0 0h8l-4 5z" fill="#cdf2b8"/></svg>
<div class="a" style="left:146px;top:947px;width:995px;height:26px;background:#fff"></div>
<div class="a" style="left:446px;top:949px;width:236px;height:23px;background:#f6f6f6"></div>
<div class="a" style="left:916px;top:949px;width:101px;height:23px;background:#f6f6f6"></div>
<div class="t" style="left:-102.80000000000001px;width:600px;text-align:center;top:953.78px;font-size:16.8px;color:#000;">16</div>
<div class="t" style="left:448px;top:954.58px;font-size:14.67px;color:#d26a50;">welding machine used for sale</div>
<div class="t" style="left:448.5px;width:600px;text-align:center;top:953.36px;font-size:17.3px;color:#000;">USA</div>
<div class="t" style="left:666px;width:600px;text-align:center;top:954.42px;font-size:15.1px;color:#333333;">880</div>
<div class="a" style="left:1028px;top:955px;width:104px;height:16px;background:#e8eaed;border-radius:8px"></div>
<div class="t" style="left:1034.5px;top:956.66px;font-size:13.4px;color:#000;">Option</div>
<svg style="left:1117px;top:960.5px;" width="8" height="5" viewBox="0 0 8 5"><path d="M0 0h8l-4 5z" fill="#000"/></svg>
<div class="a" style="left:146px;top:973px;width:995px;height:26px;background:#fff"></div>
<div class="a" style="left:446px;top:975px;width:236px;height:23px;background:#fafafa"></div>
<div class="a" style="left:916px;top:975px;width:101px;height:23px;background:#fafafa"></div>
<div class="t" style="left:-102.80000000000001px;width:600px;text-align:center;top:979.78px;font-size:16.8px;color:#000;">17</div>
<div class="t" style="left:448px;top:980.58px;font-size:14.67px;color:#d26a50;">welding machine price</div>
<div class="t" style="left:448.5px;width:600px;text-align:center;top:979.36px;font-size:17.3px;color:#000;">USA</div>
<div class="t" style="left:564px;width:600px;text-align:center;top:984.13px;font-size:12.6px;color:#000;">7</div>
<div class="t" style="left:666px;width:600px;text-align:center;top:980.42px;font-size:15.1px;color:#333333;">590</div>
<div class="a" style="left:1028px;top:981px;width:104px;height:16px;background:#8bcf50;border-radius:8px"></div>
<div class="t" style="left:1034.5px;top:982.66px;font-size:13.4px;color:#11734b;">Easy</div>
<svg style="left:1117px;top:986.5px;" width="8" height="5" viewBox="0 0 8 5"><path d="M0 0h8l-4 5z" fill="#11734b"/></svg>
<div class="a" style="left:146px;top:999px;width:995px;height:26px;background:#fff"></div>
<div class="a" style="left:446px;top:1001px;width:236px;height:23px;background:#fafafa"></div>
<div class="a" style="left:916px;top:1001px;width:101px;height:23px;background:#fafafa"></div>
<div class="t" style="left:-102.80000000000001px;width:600px;text-align:center;top:1005.78px;font-size:16.8px;color:#000;">18</div>
<div class="t" style="left:448px;top:1006.58px;font-size:14.67px;color:#d26a50;">welding machine diesel</div>
<div class="t" style="left:448.5px;width:600px;text-align:center;top:1005.36px;font-size:17.3px;color:#000;">USA</div>
<div class="t" style="left:564px;width:600px;text-align:center;top:1010.13px;font-size:12.6px;color:#000;">3</div>
<div class="t" style="left:666px;width:600px;text-align:center;top:1006.42px;font-size:15.1px;color:#333333;">590</div>
<div class="a" style="left:1028px;top:1007px;width:104px;height:16px;background:#8bcf50;border-radius:8px"></div>
<div class="t" style="left:1034.5px;top:1008.66px;font-size:13.4px;color:#11734b;">Easy</div>
<svg style="left:1117px;top:1012.5px;" width="8" height="5" viewBox="0 0 8 5"><path d="M0 0h8l-4 5z" fill="#11734b"/></svg>
<div class="a" style="left:146px;top:1025px;width:995px;height:5px;background:#fff"></div>
<div class="a" style="left:446px;top:1027px;width:236px;height:3px;background:#f6f6f6"></div>
<div class="a" style="left:916px;top:1027px;width:101px;height:3px;background:#f6f6f6"></div>
<div class="a" style="left:146px;top:488px;width:1px;height:542px;background:#000"></div>
<div class="a" style="left:247px;top:488px;width:1px;height:542px;background:#000"></div>
<div class="a" style="left:444px;top:488px;width:1px;height:542px;background:#000"></div>
<div class="a" style="left:683px;top:488px;width:1px;height:542px;background:#000"></div>
<div class="a" style="left:813px;top:488px;width:1px;height:542px;background:#000"></div>
<div class="a" style="left:914px;top:488px;width:1px;height:542px;background:#000"></div>
<div class="a" style="left:1018px;top:488px;width:1px;height:542px;background:#000"></div>
<div class="a" style="left:1141px;top:488px;width:1px;height:542px;background:#000"></div>
<div class="a" style="left:146px;top:488px;width:996px;height:1px;background:#000"></div>
<div class="a" style="left:146px;top:557px;width:996px;height:1px;background:#000"></div>
<div class="a" style="left:146px;top:583px;width:102px;height:1px;background:#000"></div>
<div class="a" style="left:444px;top:583px;width:698px;height:1px;background:#000"></div>
<div class="a" style="left:146px;top:609px;width:102px;height:1px;background:#000"></div>
<div class="a" style="left:444px;top:609px;width:698px;height:1px;background:#000"></div>
<div class="a" style="left:146px;top:635px;width:102px;height:1px;background:#000"></div>
<div class="a" style="left:444px;top:635px;width:698px;height:1px;background:#000"></div>
<div class="a" style="left:146px;top:661px;width:102px;height:1px;background:#000"></div>
<div class="a" style="left:444px;top:661px;width:698px;height:1px;background:#000"></div>
<div class="a" style="left:146px;top:687px;width:102px;height:1px;background:#000"></div>
<div class="a" style="left:444px;top:687px;width:698px;height:1px;background:#000"></div>
<div class="a" style="left:146px;top:713px;width:102px;height:1px;background:#000"></div>
<div class="a" style="left:444px;top:713px;width:698px;height:1px;background:#000"></div>
<div class="a" style="left:146px;top:739px;width:102px;height:1px;background:#000"></div>
<div class="a" style="left:444px;top:739px;width:698px;height:1px;background:#000"></div>
<div class="a" style="left:146px;top:765px;width:102px;height:1px;background:#000"></div>
<div class="a" style="left:444px;top:765px;width:698px;height:1px;background:#000"></div>
<div class="a" style="left:146px;top:791px;width:102px;height:1px;background:#000"></div>
<div class="a" style="left:444px;top:791px;width:698px;height:1px;background:#000"></div>
<div class="a" style="left:146px;top:817px;width:102px;height:1px;background:#000"></div>
<div class="a" style="left:444px;top:817px;width:698px;height:1px;background:#000"></div>
<div class="a" style="left:146px;top:843px;width:102px;height:1px;background:#000"></div>
<div class="a" style="left:444px;top:843px;width:698px;height:1px;background:#000"></div>
<div class="a" style="left:146px;top:869px;width:102px;height:1px;background:#000"></div>
<div class="a" style="left:444px;top:869px;width:698px;height:1px;background:#000"></div>
<div class="a" style="left:146px;top:895px;width:102px;height:1px;background:#000"></div>
<div class="a" style="left:444px;top:895px;width:698px;height:1px;background:#000"></div>
<div class="a" style="left:146px;top:921px;width:102px;height:1px;background:#000"></div>
<div class="a" style="left:444px;top:921px;width:698px;height:1px;background:#000"></div>
<div class="a" style="left:146px;top:947px;width:102px;height:1px;background:#000"></div>
<div class="a" style="left:444px;top:947px;width:698px;height:1px;background:#000"></div>
<div class="a" style="left:146px;top:973px;width:102px;height:1px;background:#000"></div>
<div class="a" style="left:444px;top:973px;width:698px;height:1px;background:#000"></div>
<div class="a" style="left:146px;top:999px;width:102px;height:1px;background:#000"></div>
<div class="a" style="left:444px;top:999px;width:698px;height:1px;background:#000"></div>
<div class="a" style="left:146px;top:1025px;width:102px;height:1px;background:#000"></div>
<div class="a" style="left:444px;top:1025px;width:698px;height:1px;background:#000"></div>
<div class="a" style="left:1444px;top:661px;width:102px;height:27px;border:2px solid #1a65d6"></div>
<div class="a" style="left:1542px;top:684px;width:8px;height:8px;background:#1a65d6;border-radius:50%;border:1px solid #fff"></div>
<div class="a" style="left:1909px;top:303px;width:10px;height:727px;background:#fff"></div>
<div class="a" style="left:1909px;top:303px;width:10px;height:23px;background:#f8f9fa"></div>
<div class="a" style="left:1909px;top:302px;width:10px;height:1px;background:#c4c7c5"></div>
<div class="a" style="left:1909px;top:326px;width:10px;height:1px;background:#e1e1e1"></div>
<div class="a" style="left:1908px;top:303px;width:1px;height:740px;background:#dcdcdc"></div>
<div class="a" style="left:1910px;top:328px;width:9px;height:26px;background:#dadce0;border-radius:5px"></div>
<div class="a" style="left:1909px;top:998px;width:10px;height:32px;background:#f8f8f8"></div>
<div class="a" style="left:1909px;top:998px;width:10px;height:1px;background:#e3e3e3"></div>
<div class="a" style="left:1909px;top:1014px;width:10px;height:1px;background:#e3e3e3"></div>
<div class="a" style="left:1909px;top:1030px;width:10px;height:1px;background:#e3e3e3"></div>
<svg style="left:1912px;top:1003px;" width="7" height="5" viewBox="0 0 7 5"><path d="M0 5h7l-3.5-5z" fill="#8a8a8a"/></svg>
<svg style="left:1912px;top:1020px;" width="7" height="5" viewBox="0 0 7 5"><path d="M0 0h7l-3.5 5z" fill="#8a8a8a"/></svg>
<div class="a" style="left:0px;top:1030px;width:1919px;height:13px;background:#fff"></div>
<div class="a" style="left:0px;top:1030px;width:46px;height:13px;background:#f8f9fa"></div>
<div class="a" style="left:45px;top:1030px;width:1px;height:13px;background:#e1e1e1"></div>
<div class="a" style="left:0px;top:1030px;width:1909px;height:1px;background:#e8e8e8"></div>
<div class="a" style="left:48px;top:1032px;width:1127px;height:9px;background:#dadce0;border-radius:5px"></div>
<div class="a" style="left:0px;top:1043px;width:1919px;height:1px;background:#e6e6e6"></div>
<div class="a" style="left:0px;top:1044px;width:1919px;height:35px;background:#f9fbfd"></div>
<svg style="left:57px;top:1058px;" width="11" height="11" viewBox="0 0 11 11"><path d="M5.5 0.5 V10.5 M0.5 5.5 H10.5" stroke="#444746" stroke-width="1.8"/></svg>
<svg style="left:95px;top:1058px;" width="14" height="11" viewBox="0 0 14 11"><path d="M0 1 H14 M0 5.5 H14 M0 10 H14" stroke="#444746" stroke-width="1.8"/></svg>
<div class="a" style="left:134px;top:1044px;width:91px;height:35px;background:#e1e9f7"></div>
<div class="t" style="left:146px;top:1055.98px;font-size:14.2px;color:#0b57d0;font-weight:bold">Sheet1</div>
<svg style="left:205px;top:1061px;" width="8.5" height="5" viewBox="0 0 8.5 5"><path d="M0 0h8.5l-4.25 5z" fill="#0b57d0"/></svg>
<div class="a" style="left:1540px;top:936px;width:364px;height:131px;background:#3a3a3a;box-shadow:0 0 4px rgba(0,0,0,.2)"></div>
<svg style="left:1556px;top:954px;" width="16" height="17" viewBox="0 0 16 17"><defs><linearGradient id="lsf" x1="0" y1="1" x2="1" y2="0"><stop offset="0" stop-color="#8a4fc8"/><stop offset="1" stop-color="#c8a0ec"/></linearGradient></defs><path d="M1 16 C2 9 8 2 15 1 C14 8 9 13 1 16Z" fill="url(#lsf)"/><path d="M1 16 L11 5" stroke="#5c2f8c" stroke-width=".7"/></svg>
<div class="t" style="left:1580px;top:956.79px;font-size:12.3px;color:#ffffff;">Lightshot</div>
<svg style="left:1871px;top:957px;" width="10" height="10" viewBox="0 0 10 10"><path d="M0.5 0.5l9 9M9.5 0.5l-9 9" stroke="#cfcfcf" stroke-width="1.1"/></svg>
<div class="t" style="left:1556px;top:989.98px;font-size:14.2px;color:#ffffff;font-weight:bold">Lightshot</div>
<div class="t" style="left:1556px;top:1010.11px;font-size:14.4px;color:#b8b8b8;">Screenshot is saved to Screenshot_1.jpg. Click</div>
<div class="t" style="left:1556px;top:1030.01px;font-size:14.4px;color:#b8b8b8;">here to open in the folder.</div>
<svg style="left:1891px;top:1066.5px;" width="5" height="3" viewBox="0 0 5 3"><path d="M0 0h5l-2.5 3z" fill="#3a3a3a"/></svg>
</body></html>
